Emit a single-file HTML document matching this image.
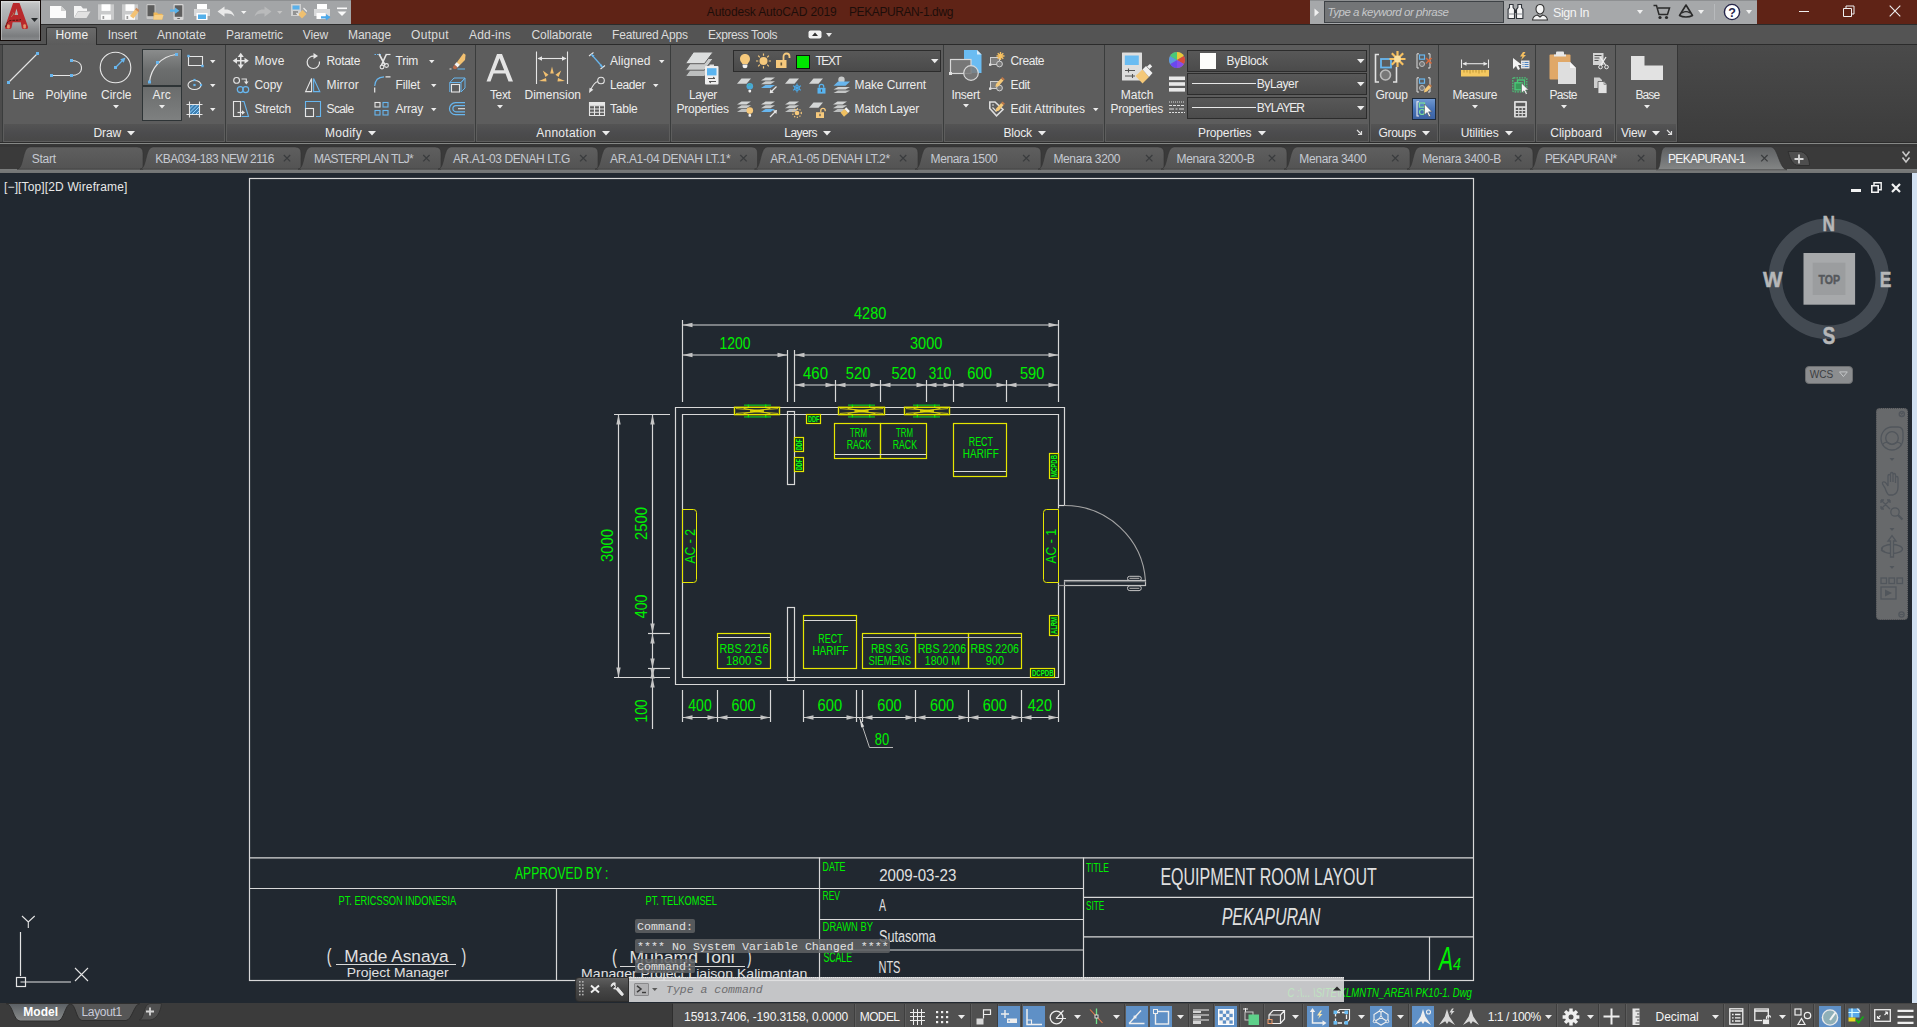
<!DOCTYPE html>
<html><head><meta charset="utf-8"><title>AutoCAD</title>
<style>
html,body{margin:0;padding:0;}
body{width:1917px;height:1027px;overflow:hidden;position:relative;background:#212830;font-family:"Liberation Sans",sans-serif;}
.t{position:absolute;white-space:nowrap;}
.dwg{position:absolute;left:0;top:0;}
#ui{position:absolute;left:0;top:0;width:1917px;height:1027px;}
</style></head><body>
<svg class="dwg" width="1917" height="1027" viewBox="0 0 1917 1027"><rect x="249.5" y="178.5" width="1224.0" height="802.0" fill="none" stroke="#d8d8d8" stroke-width="1.2" rx="0"/>
<line x1="249.5" y1="857.9" x2="1473.5" y2="857.9" stroke="#d8d8d8" stroke-width="1.2"/>
<line x1="249.5" y1="888.5" x2="1083.5" y2="888.5" stroke="#d8d8d8" stroke-width="1.2"/>
<line x1="556.5" y1="888.5" x2="556.5" y2="980.5" stroke="#d8d8d8" stroke-width="1.2"/>
<line x1="819.5" y1="857.5" x2="819.5" y2="980.5" stroke="#d8d8d8" stroke-width="1.2"/>
<line x1="1083.5" y1="857.5" x2="1083.5" y2="980.5" stroke="#d8d8d8" stroke-width="1.2"/>
<line x1="819.5" y1="919.5" x2="1083.5" y2="919.5" stroke="#d8d8d8" stroke-width="1.2"/>
<line x1="819.5" y1="950" x2="1083.5" y2="950" stroke="#d8d8d8" stroke-width="1.2"/>
<line x1="1083.5" y1="897.3" x2="1473.5" y2="897.3" stroke="#d8d8d8" stroke-width="1.2"/>
<line x1="1083.5" y1="936.8" x2="1473.5" y2="936.8" stroke="#d8d8d8" stroke-width="1.2"/>
<line x1="1429.5" y1="936.8" x2="1429.5" y2="980.5" stroke="#d8d8d8" stroke-width="1.2"/>
<polyline points="1064.5,505.5 1064.5,407.5 675.5,407.5 675.5,684.5 1064.5,684.5 1064.5,585.5" fill="none" stroke="#d8d8d8" stroke-width="1.2"/>
<polyline points="1058.5,508.5 1058.5,414.5 682.5,414.5 682.5,677.5 1058.5,677.5 1058.5,582.5" fill="none" stroke="#d8d8d8" stroke-width="1.2"/>
<line x1="1058.5" y1="505.5" x2="1064.5" y2="505.5" stroke="#d8d8d8" stroke-width="1.2"/>
<rect x="787.5" y="411.5" width="7.0" height="73.0" fill="none" stroke="#d8d8d8" stroke-width="1.2" rx="0"/>
<rect x="787.5" y="607.5" width="7.0" height="73.0" fill="none" stroke="#d8d8d8" stroke-width="1.2" rx="0"/>
<path d="M1064.5,505.5 A81,80.5 0 0 1 1145.5,581" fill="none" stroke="#a4a4a4" stroke-width="1.1"/>
<rect x="1064.5" y="580.5" width="81.0" height="5.0" fill="none" stroke="#c0c0c0" stroke-width="1.2" rx="0"/>
<line x1="1058.5" y1="585.5" x2="1064.5" y2="585.5" stroke="#909090" stroke-width="1.2"/>
<rect x="1127.5" y="576.3" width="13.8" height="4.3" rx="2.1" fill="none" stroke="#c4c4c4" stroke-width="1"/><rect x="1127.5" y="585.8" width="13.8" height="4.8" rx="2.3" fill="none" stroke="#c4c4c4" stroke-width="1"/><path d="M1129.5,578.4 H1139.3 M1129.5,588.3 H1139.3" stroke="#9a9a9a" stroke-width="1.2"/>
<line x1="1064.5" y1="581.7" x2="1145.5" y2="581.7" stroke="#707478" stroke-width="1.2"/>
<line x1="744" y1="405.2" x2="771" y2="405.2" stroke="#12a422" stroke-width="1.5"/>
<line x1="744" y1="416.9" x2="771" y2="416.9" stroke="#12a422" stroke-width="1.5"/>
<line x1="748.4" y1="404.6" x2="748.4" y2="407.6" stroke="#00e000" stroke-width="1.3"/>
<line x1="748.4" y1="414.4" x2="748.4" y2="417.4" stroke="#00e000" stroke-width="1.3"/>
<line x1="765.7" y1="404.6" x2="765.7" y2="407.6" stroke="#00e000" stroke-width="1.3"/>
<line x1="765.7" y1="414.4" x2="765.7" y2="417.4" stroke="#00e000" stroke-width="1.3"/>
<rect x="734.5" y="407.3" width="45.0" height="7.3" fill="none" stroke="#e6e600" stroke-width="1.4"/>
<path d="M736.0,408.6 L760.0,410.4 M736.0,413.4 L760.0,411.6 M778.0,408.6 L754.0,410.4 M778.0,413.4 L754.0,411.6 M743.5,408.3 L755.0,410.6 M743.5,413.7 L755.0,411.4 M770.5,408.3 L759.0,410.6 M770.5,413.7 L759.0,411.4" fill="none" stroke="#d6cc10" stroke-width="0.9"/>
<path d="M750.0,411 L764.0,411" stroke="#e8e000" stroke-width="1.6"/>
<line x1="848" y1="405.2" x2="875" y2="405.2" stroke="#12a422" stroke-width="1.5"/>
<line x1="848" y1="416.9" x2="875" y2="416.9" stroke="#12a422" stroke-width="1.5"/>
<line x1="852.4" y1="404.6" x2="852.4" y2="407.6" stroke="#00e000" stroke-width="1.3"/>
<line x1="852.4" y1="414.4" x2="852.4" y2="417.4" stroke="#00e000" stroke-width="1.3"/>
<line x1="869.7" y1="404.6" x2="869.7" y2="407.6" stroke="#00e000" stroke-width="1.3"/>
<line x1="869.7" y1="414.4" x2="869.7" y2="417.4" stroke="#00e000" stroke-width="1.3"/>
<rect x="838.5" y="407.3" width="46.0" height="7.3" fill="none" stroke="#e6e600" stroke-width="1.4"/>
<path d="M840.0,408.6 L864.5,410.4 M840.0,413.4 L864.5,411.6 M883.0,408.6 L858.5,410.4 M883.0,413.4 L858.5,411.6 M847.5,408.3 L859.5,410.6 M847.5,413.7 L859.5,411.4 M875.5,408.3 L863.5,410.6 M875.5,413.7 L863.5,411.4" fill="none" stroke="#d6cc10" stroke-width="0.9"/>
<path d="M854.5,411 L868.5,411" stroke="#e8e000" stroke-width="1.6"/>
<line x1="913" y1="405.2" x2="940" y2="405.2" stroke="#12a422" stroke-width="1.5"/>
<line x1="913" y1="416.9" x2="940" y2="416.9" stroke="#12a422" stroke-width="1.5"/>
<line x1="917.4" y1="404.6" x2="917.4" y2="407.6" stroke="#00e000" stroke-width="1.3"/>
<line x1="917.4" y1="414.4" x2="917.4" y2="417.4" stroke="#00e000" stroke-width="1.3"/>
<line x1="934.7" y1="404.6" x2="934.7" y2="407.6" stroke="#00e000" stroke-width="1.3"/>
<line x1="934.7" y1="414.4" x2="934.7" y2="417.4" stroke="#00e000" stroke-width="1.3"/>
<rect x="904.5" y="407.3" width="45.0" height="7.3" fill="none" stroke="#e6e600" stroke-width="1.4"/>
<path d="M906.0,408.6 L930.0,410.4 M906.0,413.4 L930.0,411.6 M948.0,408.6 L924.0,410.4 M948.0,413.4 L924.0,411.6 M913.5,408.3 L925.0,410.6 M913.5,413.7 L925.0,411.4 M940.5,408.3 L929.0,410.6 M940.5,413.7 L929.0,411.4" fill="none" stroke="#d6cc10" stroke-width="0.9"/>
<path d="M920.0,411 L934.0,411" stroke="#e8e000" stroke-width="1.6"/>
<rect x="834.5" y="423.5" width="46.0" height="35.0" fill="none" stroke="#e6e600" stroke-width="1.2" rx="0"/>
<rect x="880.5" y="423.5" width="46.0" height="35.0" fill="none" stroke="#e6e600" stroke-width="1.2" rx="0"/>
<line x1="835" y1="454.5" x2="926" y2="454.5" stroke="#d8d8d8" stroke-width="1.2"/>
<rect x="953.5" y="423.5" width="53.0" height="53.0" fill="none" stroke="#e6e600" stroke-width="1.2" rx="0"/>
<line x1="954" y1="471.5" x2="1006" y2="471.5" stroke="#d8d8d8" stroke-width="1.2"/>
<rect x="717.5" y="633.5" width="53.0" height="35.0" fill="none" stroke="#e6e600" stroke-width="1.2" rx="0"/>
<line x1="718" y1="637.5" x2="770" y2="637.5" stroke="#d8d8d8" stroke-width="1.2"/>
<rect x="803.5" y="615.5" width="53.0" height="53.0" fill="none" stroke="#e6e600" stroke-width="1.2" rx="0"/>
<line x1="804" y1="620.5" x2="856" y2="620.5" stroke="#d8d8d8" stroke-width="1.2"/>
<rect x="862.5" y="633.5" width="53.0" height="35.0" fill="none" stroke="#e6e600" stroke-width="1.2" rx="0"/>
<rect x="915.5" y="633.5" width="53.0" height="35.0" fill="none" stroke="#e6e600" stroke-width="1.2" rx="0"/>
<rect x="968.5" y="633.5" width="53.0" height="35.0" fill="none" stroke="#e6e600" stroke-width="1.2" rx="0"/>
<line x1="863" y1="637.5" x2="1021" y2="637.5" stroke="#bcbcbc" stroke-width="1.2"/>
<path d="M1058.5,509.5 H1046.5 Q1043.5,509.5 1043.5,512.5 V579.5 Q1043.5,582.5 1046.5,582.5 H1058.5 Z" fill="none" stroke="#e6e600"/>
<path d="M682.5,509.5 H693.5 Q696.5,509.5 696.5,512.5 V579.5 Q696.5,582.5 693.5,582.5 H682.5 Z" fill="none" stroke="#e6e600"/>
<rect x="806.5" y="414.5" width="14.0" height="9.0" fill="#14301c" stroke="#e6e600" stroke-width="1.2"/>
<rect x="794.5" y="437.5" width="9.0" height="14.0" fill="#14301c" stroke="#e6e600" stroke-width="1.2"/>
<rect x="794.5" y="457.5" width="9.0" height="14.0" fill="#14301c" stroke="#e6e600" stroke-width="1.2"/>
<rect x="1049.5" y="453.5" width="9.0" height="25.0" fill="#14301c" stroke="#e6e600" stroke-width="1.2"/>
<rect x="1049.5" y="615.5" width="9.0" height="20.0" fill="#14301c" stroke="#e6e600" stroke-width="1.2"/>
<rect x="1030.5" y="668.5" width="24.0" height="9.0" fill="#14301c" stroke="#e6e600" stroke-width="1.2"/>
<text x="808.00" y="422.20" font-size="9.43" fill="#10ff10" textLength="11.50" lengthAdjust="spacingAndGlyphs" font-family="Liberation Sans" font-weight="bold">DDF</text>
<text transform="translate(802.00,450.00) rotate(-90)" x="0" y="0" font-size="8.57" fill="#10ff10" textLength="11.00" lengthAdjust="spacingAndGlyphs" font-family="Liberation Sans" font-weight="bold">DDF</text>
<text transform="translate(802.00,470.00) rotate(-90)" x="0" y="0" font-size="8.57" fill="#10ff10" textLength="11.00" lengthAdjust="spacingAndGlyphs" font-family="Liberation Sans" font-weight="bold">DDF</text>
<text transform="translate(1057.00,477.00) rotate(-90)" x="0" y="0" font-size="8.57" fill="#10ff10" textLength="22.00" lengthAdjust="spacingAndGlyphs" font-family="Liberation Sans" font-weight="bold">MCPDB</text>
<text transform="translate(1057.00,634.00) rotate(-90)" x="0" y="0" font-size="8.57" fill="#10ff10" textLength="17.00" lengthAdjust="spacingAndGlyphs" font-family="Liberation Sans" font-weight="bold">ALRM</text>
<text x="1032.00" y="676.20" font-size="9.43" fill="#10ff10" textLength="21.50" lengthAdjust="spacingAndGlyphs" font-family="Liberation Sans" font-weight="bold">DCPDB</text>
<text x="850.00" y="437.00" font-size="12.86" fill="#00f000" textLength="17.00" lengthAdjust="spacingAndGlyphs" font-family="Liberation Sans" >TRM</text>
<text x="846.70" y="449.00" font-size="12.86" fill="#00f000" textLength="24.30" lengthAdjust="spacingAndGlyphs" font-family="Liberation Sans" >RACK</text>
<text x="896.00" y="437.00" font-size="12.86" fill="#00f000" textLength="17.00" lengthAdjust="spacingAndGlyphs" font-family="Liberation Sans" >TRM</text>
<text x="892.70" y="449.00" font-size="12.86" fill="#00f000" textLength="24.30" lengthAdjust="spacingAndGlyphs" font-family="Liberation Sans" >RACK</text>
<text x="968.70" y="445.70" font-size="13.29" fill="#00f000" textLength="24.30" lengthAdjust="spacingAndGlyphs" font-family="Liberation Sans" >RECT</text>
<text x="962.80" y="457.60" font-size="13.29" fill="#00f000" textLength="36.00" lengthAdjust="spacingAndGlyphs" font-family="Liberation Sans" >HARIFF</text>
<text x="818.30" y="642.60" font-size="13.29" fill="#00f000" textLength="24.30" lengthAdjust="spacingAndGlyphs" font-family="Liberation Sans" >RECT</text>
<text x="812.40" y="654.80" font-size="13.29" fill="#00f000" textLength="36.00" lengthAdjust="spacingAndGlyphs" font-family="Liberation Sans" >HARIFF</text>
<text x="719.50" y="653.20" font-size="13.29" fill="#00f000" textLength="49.00" lengthAdjust="spacingAndGlyphs" font-family="Liberation Sans" >RBS 2216</text>
<text x="726.00" y="665.40" font-size="13.29" fill="#00f000" textLength="36.00" lengthAdjust="spacingAndGlyphs" font-family="Liberation Sans" >1800 S</text>
<text x="871.00" y="653.20" font-size="13.29" fill="#00f000" textLength="37.30" lengthAdjust="spacingAndGlyphs" font-family="Liberation Sans" >RBS 3G</text>
<text x="868.40" y="665.40" font-size="13.29" fill="#00f000" textLength="42.60" lengthAdjust="spacingAndGlyphs" font-family="Liberation Sans" >SIEMENS</text>
<text x="917.70" y="653.20" font-size="13.29" fill="#00f000" textLength="48.50" lengthAdjust="spacingAndGlyphs" font-family="Liberation Sans" >RBS 2206</text>
<text x="924.80" y="665.40" font-size="13.29" fill="#00f000" textLength="35.20" lengthAdjust="spacingAndGlyphs" font-family="Liberation Sans" >1800 M</text>
<text x="970.60" y="653.20" font-size="13.29" fill="#00f000" textLength="48.40" lengthAdjust="spacingAndGlyphs" font-family="Liberation Sans" >RBS 2206</text>
<text x="985.80" y="665.40" font-size="13.29" fill="#00f000" textLength="18.20" lengthAdjust="spacingAndGlyphs" font-family="Liberation Sans" >900</text>
<text transform="translate(1055.70,563.60) rotate(-90)" x="0" y="0" font-size="15.00" fill="#00f000" textLength="34.60" lengthAdjust="spacingAndGlyphs" font-family="Liberation Sans">AC - 1</text>
<text transform="translate(695.10,563.60) rotate(-90)" x="0" y="0" font-size="15.00" fill="#00f000" textLength="34.60" lengthAdjust="spacingAndGlyphs" font-family="Liberation Sans">AC - 2</text>
<line x1="682.5" y1="320" x2="682.5" y2="402" stroke="#d8d8d8" stroke-width="1.2"/>
<line x1="1058.5" y1="320" x2="1058.5" y2="402" stroke="#d8d8d8" stroke-width="1.2"/>
<line x1="682.5" y1="325" x2="1058.5" y2="325" stroke="#d8d8d8" stroke-width="1.2"/>
<polygon points="682.5,325 692.5,322.8 692.5,327.2" fill="#c4c4c4"/>
<polygon points="1058.5,325 1048.5,322.8 1048.5,327.2" fill="#c4c4c4"/>
<text x="854.00" y="318.80" font-size="17.14" fill="#00f000" textLength="32.30" lengthAdjust="spacingAndGlyphs" font-family="Liberation Sans" >4280</text>
<line x1="787.5" y1="350" x2="787.5" y2="402" stroke="#d8d8d8" stroke-width="1.2"/>
<line x1="794.5" y1="350" x2="794.5" y2="402" stroke="#d8d8d8" stroke-width="1.2"/>
<line x1="682.5" y1="355" x2="787.5" y2="355" stroke="#d8d8d8" stroke-width="1.2"/>
<polygon points="682.5,355 692.5,352.8 692.5,357.2" fill="#c4c4c4"/>
<polygon points="787.5,355 777.5,352.8 777.5,357.2" fill="#c4c4c4"/>
<line x1="794.5" y1="355" x2="1058.5" y2="355" stroke="#d8d8d8" stroke-width="1.2"/>
<polygon points="794.5,355 804.5,352.8 804.5,357.2" fill="#c4c4c4"/>
<polygon points="1058.5,355 1048.5,352.8 1048.5,357.2" fill="#c4c4c4"/>
<text x="719.60" y="349.20" font-size="17.14" fill="#00f000" textLength="31.00" lengthAdjust="spacingAndGlyphs" font-family="Liberation Sans" >1200</text>
<text x="910.00" y="349.20" font-size="17.14" fill="#00f000" textLength="32.40" lengthAdjust="spacingAndGlyphs" font-family="Liberation Sans" >3000</text>
<line x1="835.5" y1="380" x2="835.5" y2="402" stroke="#d8d8d8" stroke-width="1.2"/>
<line x1="880.5" y1="380" x2="880.5" y2="402" stroke="#d8d8d8" stroke-width="1.2"/>
<line x1="926.5" y1="380" x2="926.5" y2="402" stroke="#d8d8d8" stroke-width="1.2"/>
<line x1="953.5" y1="380" x2="953.5" y2="402" stroke="#d8d8d8" stroke-width="1.2"/>
<line x1="1006.5" y1="380" x2="1006.5" y2="402" stroke="#d8d8d8" stroke-width="1.2"/>
<line x1="794.5" y1="385" x2="835.5" y2="385" stroke="#d8d8d8" stroke-width="1.2"/>
<polygon points="794.5,385 804.5,382.8 804.5,387.2" fill="#c4c4c4"/>
<polygon points="835.5,385 825.5,382.8 825.5,387.2" fill="#c4c4c4"/>
<line x1="835.5" y1="385" x2="880.5" y2="385" stroke="#d8d8d8" stroke-width="1.2"/>
<polygon points="835.5,385 845.5,382.8 845.5,387.2" fill="#c4c4c4"/>
<polygon points="880.5,385 870.5,382.8 870.5,387.2" fill="#c4c4c4"/>
<line x1="880.5" y1="385" x2="926.5" y2="385" stroke="#d8d8d8" stroke-width="1.2"/>
<polygon points="880.5,385 890.5,382.8 890.5,387.2" fill="#c4c4c4"/>
<polygon points="926.5,385 916.5,382.8 916.5,387.2" fill="#c4c4c4"/>
<line x1="926.5" y1="385" x2="953.5" y2="385" stroke="#d8d8d8" stroke-width="1.2"/>
<polygon points="926.5,385 936.5,382.8 936.5,387.2" fill="#c4c4c4"/>
<polygon points="953.5,385 943.5,382.8 943.5,387.2" fill="#c4c4c4"/>
<line x1="953.5" y1="385" x2="1006.5" y2="385" stroke="#d8d8d8" stroke-width="1.2"/>
<polygon points="953.5,385 963.5,382.8 963.5,387.2" fill="#c4c4c4"/>
<polygon points="1006.5,385 996.5,382.8 996.5,387.2" fill="#c4c4c4"/>
<line x1="1006.5" y1="385" x2="1058.5" y2="385" stroke="#d8d8d8" stroke-width="1.2"/>
<polygon points="1006.5,385 1016.5,382.8 1016.5,387.2" fill="#c4c4c4"/>
<polygon points="1058.5,385 1048.5,382.8 1048.5,387.2" fill="#c4c4c4"/>
<text x="803.00" y="378.80" font-size="17.14" fill="#00f000" textLength="25.00" lengthAdjust="spacingAndGlyphs" font-family="Liberation Sans" >460</text>
<text x="845.80" y="378.80" font-size="17.14" fill="#00f000" textLength="24.50" lengthAdjust="spacingAndGlyphs" font-family="Liberation Sans" >520</text>
<text x="891.40" y="378.80" font-size="17.14" fill="#00f000" textLength="24.40" lengthAdjust="spacingAndGlyphs" font-family="Liberation Sans" >520</text>
<text x="928.70" y="378.80" font-size="17.14" fill="#00f000" textLength="22.60" lengthAdjust="spacingAndGlyphs" font-family="Liberation Sans" >310</text>
<text x="967.30" y="378.80" font-size="17.14" fill="#00f000" textLength="24.70" lengthAdjust="spacingAndGlyphs" font-family="Liberation Sans" >600</text>
<text x="1019.90" y="378.80" font-size="17.14" fill="#00f000" textLength="24.40" lengthAdjust="spacingAndGlyphs" font-family="Liberation Sans" >590</text>
<line x1="614" y1="414.5" x2="670" y2="414.5" stroke="#d8d8d8" stroke-width="1.2"/>
<line x1="614" y1="677.5" x2="670" y2="677.5" stroke="#d8d8d8" stroke-width="1.2"/>
<line x1="648" y1="633.5" x2="670" y2="633.5" stroke="#d8d8d8" stroke-width="1.2"/>
<line x1="648" y1="668.5" x2="670" y2="668.5" stroke="#d8d8d8" stroke-width="1.2"/>
<line x1="618.5" y1="414.5" x2="618.5" y2="677.5" stroke="#d8d8d8" stroke-width="1.2"/>
<polygon points="618.5,414.5 616.3,424.5 620.7,424.5" fill="#c4c4c4"/>
<polygon points="618.5,677.5 616.3,667.5 620.7,667.5" fill="#c4c4c4"/>
<line x1="652.5" y1="414.5" x2="652.5" y2="729" stroke="#d8d8d8" stroke-width="1.2"/>
<polygon points="652.5,414.5 650.3,424.5 654.7,424.5" fill="#c4c4c4"/>
<polygon points="652.5,633.5 650.3,623.5 654.7,623.5" fill="#c4c4c4"/>
<polygon points="652.5,633.5 650.3,643.5 654.7,643.5" fill="#c4c4c4"/>
<polygon points="652.5,668.5 650.3,658.5 654.7,658.5" fill="#c4c4c4"/>
<polygon points="652.5,668.5 650.3,678.5 654.7,678.5" fill="#c4c4c4"/>
<polygon points="652.5,677.5 650.3,668.5 654.7,668.5" fill="#c4c4c4"/>
<polygon points="652.5,677.5 650.3,687.5 654.7,687.5" fill="#c4c4c4"/>
<text transform="translate(612.60,562.00) rotate(-90)" x="0" y="0" font-size="17.14" fill="#00f000" textLength="33.00" lengthAdjust="spacingAndGlyphs" font-family="Liberation Sans">3000</text>
<text transform="translate(646.70,540.00) rotate(-90)" x="0" y="0" font-size="17.14" fill="#00f000" textLength="33.00" lengthAdjust="spacingAndGlyphs" font-family="Liberation Sans">2500</text>
<text transform="translate(646.70,618.30) rotate(-90)" x="0" y="0" font-size="17.14" fill="#00f000" textLength="23.80" lengthAdjust="spacingAndGlyphs" font-family="Liberation Sans">400</text>
<text transform="translate(646.70,722.60) rotate(-90)" x="0" y="0" font-size="17.14" fill="#00f000" textLength="23.20" lengthAdjust="spacingAndGlyphs" font-family="Liberation Sans">100</text>
<line x1="682.5" y1="690" x2="682.5" y2="722" stroke="#d8d8d8" stroke-width="1.2"/>
<line x1="717.5" y1="690" x2="717.5" y2="722" stroke="#d8d8d8" stroke-width="1.2"/>
<line x1="770.5" y1="690" x2="770.5" y2="722" stroke="#d8d8d8" stroke-width="1.2"/>
<line x1="682.5" y1="717.5" x2="717.5" y2="717.5" stroke="#d8d8d8" stroke-width="1.2"/>
<polygon points="682.5,717.5 692.5,715.3 692.5,719.7" fill="#c4c4c4"/>
<polygon points="717.5,717.5 707.5,715.3 707.5,719.7" fill="#c4c4c4"/>
<line x1="717.5" y1="717.5" x2="770.5" y2="717.5" stroke="#d8d8d8" stroke-width="1.2"/>
<polygon points="717.5,717.5 727.5,715.3 727.5,719.7" fill="#c4c4c4"/>
<polygon points="770.5,717.5 760.5,715.3 760.5,719.7" fill="#c4c4c4"/>
<text x="688.30" y="711.00" font-size="17.14" fill="#00f000" textLength="23.40" lengthAdjust="spacingAndGlyphs" font-family="Liberation Sans" >400</text>
<text x="731.60" y="711.00" font-size="17.14" fill="#00f000" textLength="23.80" lengthAdjust="spacingAndGlyphs" font-family="Liberation Sans" >600</text>
<line x1="803.5" y1="690" x2="803.5" y2="722" stroke="#d8d8d8" stroke-width="1.2"/>
<line x1="856.5" y1="690" x2="856.5" y2="722" stroke="#d8d8d8" stroke-width="1.2"/>
<line x1="862.5" y1="690" x2="862.5" y2="722" stroke="#d8d8d8" stroke-width="1.2"/>
<line x1="915.5" y1="690" x2="915.5" y2="722" stroke="#d8d8d8" stroke-width="1.2"/>
<line x1="968.5" y1="690" x2="968.5" y2="722" stroke="#d8d8d8" stroke-width="1.2"/>
<line x1="1021.5" y1="690" x2="1021.5" y2="722" stroke="#d8d8d8" stroke-width="1.2"/>
<line x1="1058.5" y1="690" x2="1058.5" y2="722" stroke="#d8d8d8" stroke-width="1.2"/>
<line x1="803.5" y1="717.5" x2="1058.5" y2="717.5" stroke="#d8d8d8" stroke-width="1.2"/>
<polygon points="803.5,717.5 813.5,715.3 813.5,719.7" fill="#c4c4c4"/>
<polygon points="856.5,717.5 846.5,715.3 846.5,719.7" fill="#c4c4c4"/>
<polygon points="862.5,717.5 872.5,715.3 872.5,719.7" fill="#c4c4c4"/>
<polygon points="915.5,717.5 905.5,715.3 905.5,719.7" fill="#c4c4c4"/>
<polygon points="915.5,717.5 925.5,715.3 925.5,719.7" fill="#c4c4c4"/>
<polygon points="968.5,717.5 958.5,715.3 958.5,719.7" fill="#c4c4c4"/>
<polygon points="968.5,717.5 978.5,715.3 978.5,719.7" fill="#c4c4c4"/>
<polygon points="1021.5,717.5 1011.5,715.3 1011.5,719.7" fill="#c4c4c4"/>
<polygon points="1021.5,717.5 1031.5,715.3 1031.5,719.7" fill="#c4c4c4"/>
<polygon points="1058.5,717.5 1048.5,715.3 1048.5,719.7" fill="#c4c4c4"/>
<polygon points="856.5,717.5 856.5,715.3 856.5,719.7" fill="#c4c4c4"/>
<text x="817.60" y="711.10" font-size="17.14" fill="#00f000" textLength="24.50" lengthAdjust="spacingAndGlyphs" font-family="Liberation Sans" >600</text>
<text x="877.30" y="711.10" font-size="17.14" fill="#00f000" textLength="24.30" lengthAdjust="spacingAndGlyphs" font-family="Liberation Sans" >600</text>
<text x="929.90" y="711.10" font-size="17.14" fill="#00f000" textLength="24.30" lengthAdjust="spacingAndGlyphs" font-family="Liberation Sans" >600</text>
<text x="982.70" y="711.10" font-size="17.14" fill="#00f000" textLength="24.20" lengthAdjust="spacingAndGlyphs" font-family="Liberation Sans" >600</text>
<text x="1027.70" y="711.10" font-size="17.14" fill="#00f000" textLength="24.30" lengthAdjust="spacingAndGlyphs" font-family="Liberation Sans" >420</text>
<polyline points="859.5,717.5 869.5,747.5 893,747.5" fill="none" stroke="#b8b8b8"/>
<polygon points="859.5,717.5 857.3,717.5 861.7,717.5" fill="#c4c4c4"/>
<polygon points="859.5,717.5 861.2,727.5 864.2,726.5" fill="#d8d8d8"/>
<text x="874.70" y="744.80" font-size="17.14" fill="#00f000" textLength="14.40" lengthAdjust="spacingAndGlyphs" font-family="Liberation Sans" >80</text>
<text x="515.00" y="879.10" font-size="16.71" fill="#00f000" textLength="93.50" lengthAdjust="spacingAndGlyphs" font-family="Liberation Sans" >APPROVED BY :</text>
<text x="338.50" y="905.10" font-size="13.14" fill="#00f000" textLength="117.70" lengthAdjust="spacingAndGlyphs" font-family="Liberation Sans" >PT. ERICSSON INDONESIA</text>
<text x="645.50" y="905.00" font-size="13.43" fill="#00f000" textLength="71.40" lengthAdjust="spacingAndGlyphs" font-family="Liberation Sans" >PT. TELKOMSEL</text>
<text x="326.80" y="962.50" font-size="20.00" fill="#e0e0e0" textLength="4.70" lengthAdjust="spacingAndGlyphs" font-family="Liberation Sans" >(</text>
<text x="461.50" y="962.50" font-size="20.00" fill="#e0e0e0" textLength="4.70" lengthAdjust="spacingAndGlyphs" font-family="Liberation Sans" >)</text>
<text x="344.30" y="961.90" font-size="16.71" fill="#e0e0e0" textLength="104.40" lengthAdjust="spacingAndGlyphs" font-family="Liberation Sans" >Made Asnaya</text>
<line x1="336" y1="964.5" x2="456" y2="964.5" stroke="#d8d8d8" stroke-width="1.2"/>
<text x="346.80" y="976.90" font-size="12.43" fill="#e0e0e0" textLength="101.90" lengthAdjust="spacingAndGlyphs" font-family="Liberation Sans" >Project Manager</text>
<text x="612.10" y="963.50" font-size="20.00" fill="#e0e0e0" textLength="4.90" lengthAdjust="spacingAndGlyphs" font-family="Liberation Sans" >(</text>
<text x="747.00" y="963.50" font-size="20.00" fill="#e0e0e0" textLength="4.60" lengthAdjust="spacingAndGlyphs" font-family="Liberation Sans" >)</text>
<text x="629.60" y="962.70" font-size="16.43" fill="#e0e0e0" textLength="105.10" lengthAdjust="spacingAndGlyphs" font-family="Liberation Sans" >Muhamd Toni</text>
<line x1="620" y1="966.5" x2="745" y2="966.5" stroke="#d8d8d8" stroke-width="1.2"/>
<text x="581.10" y="977.70" font-size="12.29" fill="#e0e0e0" textLength="226.30" lengthAdjust="spacingAndGlyphs" font-family="Liberation Sans" >Manager Project Liaison Kalimantan</text>
<text x="822.60" y="870.70" font-size="13.43" fill="#00f000" textLength="22.90" lengthAdjust="spacingAndGlyphs" font-family="Liberation Sans" >DATE</text>
<text x="822.60" y="900.30" font-size="12.86" fill="#00f000" textLength="17.40" lengthAdjust="spacingAndGlyphs" font-family="Liberation Sans" >REV</text>
<text x="822.60" y="931.10" font-size="13.14" fill="#00f000" textLength="50.40" lengthAdjust="spacingAndGlyphs" font-family="Liberation Sans" >DRAWN BY</text>
<text x="823.50" y="962.10" font-size="14.00" fill="#00f000" textLength="28.50" lengthAdjust="spacingAndGlyphs" font-family="Liberation Sans" >SCALE</text>
<text x="879.20" y="881.00" font-size="17.14" fill="#e0e0e0" textLength="77.10" lengthAdjust="spacingAndGlyphs" font-family="Liberation Sans" >2009-03-23</text>
<text x="879.00" y="911.30" font-size="17.14" fill="#e0e0e0" textLength="7.00" lengthAdjust="spacingAndGlyphs" font-family="Liberation Sans" >A</text>
<text x="879.00" y="942.00" font-size="16.71" fill="#e0e0e0" textLength="56.80" lengthAdjust="spacingAndGlyphs" font-family="Liberation Sans" >Sutasoma</text>
<text x="878.50" y="973.40" font-size="17.14" fill="#e0e0e0" textLength="21.90" lengthAdjust="spacingAndGlyphs" font-family="Liberation Sans" >NTS</text>
<text x="1085.90" y="871.90" font-size="13.00" fill="#00f000" textLength="23.00" lengthAdjust="spacingAndGlyphs" font-family="Liberation Sans" >TITLE</text>
<text x="1085.90" y="910.20" font-size="13.00" fill="#00f000" textLength="18.30" lengthAdjust="spacingAndGlyphs" font-family="Liberation Sans" >SITE</text>
<text x="1160.40" y="885.40" font-size="23.43" fill="#e0e0e0" textLength="216.50" lengthAdjust="spacingAndGlyphs" font-family="Liberation Sans" >EQUIPMENT ROOM LAYOUT</text>
<text x="1221.70" y="924.90" font-size="23.57" fill="#e0e0e0" textLength="98.60" lengthAdjust="spacingAndGlyphs" font-family="Liberation Sans" font-style="italic" >PEKAPURAN</text>
<text x="1439.00" y="969.80" font-size="32.86" fill="#00f000" textLength="14.00" lengthAdjust="spacingAndGlyphs" font-family="Liberation Sans" font-style="italic" >A</text>
<text x="1453.00" y="969.80" font-size="17.14" fill="#00f000" textLength="8.00" lengthAdjust="spacingAndGlyphs" font-family="Liberation Sans" font-style="italic" >4</text>
<text x="1287.50" y="996.80" font-size="12.57" fill="#00f000" textLength="184.40" lengthAdjust="spacingAndGlyphs" font-family="Liberation Sans" font-style="italic" >C :\...  \SITE\KLMNTN_AREA\ PK10-1. Dwg</text>
<line x1="20.5" y1="932" x2="20.5" y2="976" stroke="#e4e4e4" stroke-width="1.2"/>
<line x1="20.5" y1="982" x2="71" y2="982" stroke="#e4e4e4" stroke-width="1.2"/>
<rect x="16.5" y="977.5" width="9.0" height="9.0" fill="none" stroke="#e4e4e4" stroke-width="1.2" rx="0"/>
<path d="M22,916 L28.3,922 L34.7,916 M28.3,922 V928" fill="none" stroke="#e4e4e4" stroke-width="1.1"/>
<path d="M75,968 L88,981 M88,968 L75,981" fill="none" stroke="#e4e4e4" stroke-width="1.1"/></svg>
<div id="ui">
<div style="position:absolute;left:0px;top:0px;width:1917px;height:24px;background:#5f2316"></div>
<div style="position:absolute;left:40px;top:0px;width:311px;height:24px;background:linear-gradient(#8e9092 0,#8e9092 1px,#a3a5a7 1px,#a3a5a7 100%)"></div>
<svg style="position:absolute;left:49px;top:5px" width="18" height="14" viewBox="0 0 18 14"><path d="M1,1 H12 L17,6 V13 H1 Z" fill="#fbfbfb"/><path d="M12,1 V6 H17 Z" fill="#cfcfcf"/></svg>
<svg style="position:absolute;left:73px;top:5px" width="18" height="14" viewBox="0 0 18 14"><path d="M1,1 H8 L10,3.5 H14 V6 H5 L1,13 Z" fill="#f4f4f4"/><path d="M5,6.5 H17.5 L13.5,13 H1.2 Z" fill="#e2e2e2"/></svg>
<svg style="position:absolute;left:97px;top:4px" width="18" height="16" viewBox="0 0 18 16"><path d="M1,0.3 H17 V15.8 H1 Z" fill="#c9cacb"/><rect x="4.5" y="0.3" width="9" height="6.6" fill="#fff"/><rect x="4" y="10.5" width="10" height="5.3" fill="#fafafa"/><rect x="5.5" y="12" width="1.7" height="3" fill="#9a9a9a"/></svg>
<svg style="position:absolute;left:121px;top:4px" width="18" height="16" viewBox="0 0 18 16"><path d="M1,0.3 H17 V15.8 H1 Z" fill="#c9cacb"/><rect x="4.5" y="0.3" width="9" height="6.6" fill="#fff"/><rect x="4" y="10.5" width="10" height="5.3" fill="#fafafa"/><rect x="5.5" y="12" width="1.7" height="3" fill="#9a9a9a"/><path d="M9,12 L14,5.5 L17.5,8 L12.5,14.5 Z" fill="#f3c274"/><path d="M14,5.5 L15.3,3.8 L18.6,6.3 L17.5,8 Z" fill="#c98a5a"/></svg>
<svg style="position:absolute;left:146px;top:3px" width="18" height="18" viewBox="0 0 18 18"><rect x="0.5" y="1" width="9" height="15" rx="1" fill="#c8c8c8"/><rect x="1.5" y="2.2" width="7" height="11" fill="#5c5c5c"/><path d="M7.5,9.5 H11 L12,10.8 H16.5 V16.5 H7.5 Z" fill="#f0b858"/><path d="M8.6,12 H17.6 L16,16.5 H7.4 Z" fill="#f7cf86"/></svg>
<svg style="position:absolute;left:170px;top:3px" width="16" height="18" viewBox="0 0 16 18"><rect x="3.5" y="1" width="10" height="16" rx="1" fill="#d6d6d6"/><rect x="4.7" y="2.3" width="7.6" height="11.5" fill="#5e5e5e"/><path d="M0,6.6 H5 V4.6 L9.4,7.7 L5,10.8 V8.8 H0 Z" fill="#5ab4ec"/><rect x="7.3" y="15" width="2.6" height="1" fill="#666"/></svg>
<svg style="position:absolute;left:193px;top:3px" width="18" height="18" viewBox="0 0 18 18"><rect x="4" y="1" width="10" height="5" fill="#fff"/><path d="M1,6 H17 V13 H1 Z" fill="#d8d9da"/><rect x="3.5" y="10" width="11" height="7" fill="#fff"/><rect x="5" y="11.5" width="8" height="4.5" fill="#54b0ea"/></svg>
<svg style="position:absolute;left:217px;top:6px" width="19" height="12" viewBox="0 0 19 12"><path d="M0.5,5.5 L7.5,0.5 V3.5 C12.5,3 16,5 17.5,10.5 C14.5,7.2 11.5,7.2 7.5,7.6 V10.8 Z" fill="#e9e9e9"/></svg>
<svg style="position:absolute;left:241.0px;top:10.5px" width="5.5" height="3" viewBox="0 0 5.5 3"><polygon points="0,0 5.5,0 2.75,3" fill="#f4f4f4"/></svg>
<svg style="position:absolute;left:253px;top:6px" width="19" height="12" viewBox="0 0 19 12"><path d="M18.5,5.5 L11.5,0.5 V3.5 C6.5,3 3,5 1.5,10.5 C4.5,7.2 7.5,7.2 11.5,7.6 V10.8 Z" fill="#b9babb"/></svg>
<svg style="position:absolute;left:277.0px;top:10.5px" width="5.5" height="3" viewBox="0 0 5.5 3"><polygon points="0,0 5.5,0 2.75,3" fill="#c4c4c4"/></svg>
<svg style="position:absolute;left:290px;top:3px" width="17" height="18" viewBox="0 0 17 18"><rect x="1" y="1" width="10" height="12" fill="#d0d0d0"/><rect x="2.5" y="2.5" width="7" height="4" fill="#5ab0ea"/><path d="M3,9 H8 M3,11 H8" stroke="#555" stroke-width="1"/><path d="M8,11.5 L12.5,7 L16.5,11 L12,15.5 Z" fill="#efc070"/><path d="M6.5,10 l2,2 M13.5,5 l3.5,3.5" stroke="#eee" stroke-width="1.2"/></svg>
<svg style="position:absolute;left:313px;top:3px" width="18" height="18" viewBox="0 0 18 18"><rect x="4" y="1" width="10" height="5" fill="#fff"/><path d="M1,6 H17 V13 H1 Z" fill="#d8d9da"/><rect x="3.5" y="10" width="9" height="6" fill="#fff"/><path d="M8,13.2 H13 V11 L17.5,14.3 L13,17.6 V15.4 H8 Z" fill="#4aa8ea"/></svg>
<svg style="position:absolute;left:337px;top:7px" width="10" height="10" viewBox="0 0 10 10"><rect x="0" y="0.5" width="10" height="1.6" fill="#fafafa"/><polygon points="0.5,4.5 9.5,4.5 5,9" fill="#fafafa"/></svg>
<div class="t" style="left:706.80px;top:4.80px;font-size:12px;line-height:14.40px;color:#1d0e0a;letter-spacing:-0.146px;">Autodesk AutoCAD 2019</div>
<div class="t" style="left:849.00px;top:4.80px;font-size:12px;line-height:14.40px;color:#1d0e0a;letter-spacing:-0.409px;">PEKAPURAN-1.dwg</div>
<div style="position:absolute;left:1310px;top:0px;width:447px;height:24px;background:linear-gradient(#8e9092 0,#8e9092 1px,#a6a8aa 1px,#a6a8aa 100%)"></div>
<svg style="position:absolute;left:1314px;top:8px" width="6" height="9" viewBox="0 0 6 9"><polygon points="0.5,0.5 5,4.5 0.5,8.5" fill="#f0f0f0"/></svg>
<div style="position:absolute;left:1324px;top:1px;width:180px;height:22px;background:#737577;border:1px solid #3e4246;box-sizing:border-box"></div>
<div class="t" style="left:1327.50px;top:5.60px;font-size:11.5px;line-height:13.80px;color:#c6c8ca;letter-spacing:-0.467px;font-style:italic;">Type a keyword or phrase</div>
<svg style="position:absolute;left:1507px;top:3px" width="17" height="18" viewBox="0 0 17 18"><path d="M2.5,1.5 h3.6 v3 l1.4,1.8 v9.2 h-6.4 v-9.2 l1.4,-1.8 z" fill="#f6f6f6" stroke="#30343a" stroke-width="1.1"/><path d="M10.9,1.5 h3.6 v3 l1.4,1.8 v9.2 h-6.4 v-9.2 l1.4,-1.8 z" fill="#f6f6f6" stroke="#30343a" stroke-width="1.1"/><rect x="7.2" y="6.5" width="2.6" height="3.5" fill="#30343a"/><path d="M1.3,11 h6 M9.7,11 h6" stroke="#8a8e94" stroke-width="1"/></svg>
<svg style="position:absolute;left:1531px;top:3px" width="18" height="18" viewBox="0 0 18 18"><path d="M9,1.5 C11.8,1.5 13,3.5 13,6 C13,8.5 11.6,11 9,11 C6.4,11 5,8.5 5,6 C5,3.5 6.2,1.5 9,1.5 Z" fill="#f5f5f5" stroke="#333" stroke-width="1.1"/><path d="M1.5,17 C2,13.5 4,12.5 6.5,12 L9,14 L11.5,12 C14,12.5 16,13.5 16.5,17 Z" fill="#f5f5f5" stroke="#333" stroke-width="1.1"/></svg>
<div class="t" style="left:1553.00px;top:5.50px;font-size:12.5px;line-height:15.00px;color:#f4f4f4;letter-spacing:-0.417px;">Sign In</div>
<svg style="position:absolute;left:1637.0px;top:10px" width="6" height="4" viewBox="0 0 6 4"><polygon points="0,0 6,0 3.0,4" fill="#f0f0f0"/></svg>
<svg style="position:absolute;left:1653px;top:4px" width="18" height="16" viewBox="0 0 18 16"><path d="M0.5,1.5 H3.5 L6,10.5 H14.5 L16.5,4 H5" fill="none" stroke="#2a2a2a" stroke-width="1.5"/><circle cx="7" cy="13.5" r="1.6" fill="#2a2a2a"/><circle cx="13.5" cy="13.5" r="1.6" fill="#2a2a2a"/></svg>
<svg style="position:absolute;left:1677px;top:3px" width="18" height="16" viewBox="0 0 18 16"><path d="M9,2 L15.5,12.5 C12,14.5 6,14.5 2.5,12.5 Z" fill="none" stroke="#2a2a2a" stroke-width="1.6" stroke-linejoin="round"/><path d="M5,10 C8,8 10,8 13,10" fill="none" stroke="#2a2a2a" stroke-width="1.3"/></svg>
<svg style="position:absolute;left:1698.0px;top:10px" width="6" height="4" viewBox="0 0 6 4"><polygon points="0,0 6,0 3.0,4" fill="#f0f0f0"/></svg>
<div style="position:absolute;left:1714px;top:4px;width:1px;height:16px;background:#b8babc"></div>
<svg style="position:absolute;left:1723px;top:3px" width="18" height="18" viewBox="0 0 18 18"><circle cx="9" cy="9" r="7.6" fill="#fff" stroke="#26264a" stroke-width="1.4"/><text x="9" y="13.5" text-anchor="middle" font-family="Liberation Sans" font-weight="bold" font-size="12.5" fill="#26264a">?</text></svg>
<svg style="position:absolute;left:1746.0px;top:10px" width="6" height="4" viewBox="0 0 6 4"><polygon points="0,0 6,0 3.0,4" fill="#f0f0f0"/></svg>
<div style="position:absolute;left:1799px;top:11px;width:10px;height:1px;background:#f0f0f0"></div>
<svg style="position:absolute;left:1843px;top:5px" width="12" height="12" viewBox="0 0 12 12"><path d="M0.5,3.5 H8.5 V11.5 H0.5 Z M3,3.5 V1 H11 V9 H8.5" fill="none" stroke="#f0f0f0" stroke-width="1"/></svg>
<svg style="position:absolute;left:1889px;top:5px" width="12" height="12" viewBox="0 0 12 12"><path d="M0.7,0.7 L11.3,11.3 M11.3,0.7 L0.7,11.3" stroke="#f0f0f0" stroke-width="1.1"/></svg>
<div style="position:absolute;left:0px;top:24px;width:1917px;height:20px;background:#545454;border-top:1px solid #2b2b2b;box-sizing:border-box"></div>
<svg style="position:absolute;left:808px;top:30px" width="14" height="9" viewBox="0 0 14 9"><rect x="0.5" y="0.5" width="13" height="8" rx="2" fill="#f2f2f2"/><polygon points="4,6 10,6 7,2.6" fill="#333"/></svg>
<svg style="position:absolute;left:826.0px;top:33px" width="6" height="4" viewBox="0 0 6 4"><polygon points="0,0 6,0 3.0,4" fill="#e8e8e8"/></svg>
<div style="position:absolute;left:0px;top:44px;width:1917px;height:99px;background:#4b4b4b;border-top:1px solid #2b2b2b;border-bottom:1px solid #2b2b2b;box-sizing:border-box"></div>
<div style="position:absolute;left:1677px;top:45px;width:240px;height:97px;background:linear-gradient(#4a4a4a,#3c3c3c)"></div>
<div style="position:absolute;left:0px;top:143px;width:1917px;height:1px;background:#868886"></div>
<div style="position:absolute;left:3px;top:45px;width:222px;height:97px;background:#5d5d5d"></div>
<div style="position:absolute;left:4px;top:124px;width:220px;height:17px;background:linear-gradient(#545454,#4c4c4e 50%,#484848)"></div>
<div style="position:absolute;left:2px;top:45px;width:1px;height:97px;background:#3a3c3c"></div>
<div style="position:absolute;left:226px;top:45px;width:249px;height:97px;background:#5d5d5d"></div>
<div style="position:absolute;left:227px;top:124px;width:247px;height:17px;background:linear-gradient(#545454,#4c4c4e 50%,#484848)"></div>
<div style="position:absolute;left:225px;top:45px;width:1px;height:97px;background:#3a3c3c"></div>
<div style="position:absolute;left:476px;top:45px;width:194px;height:97px;background:#5d5d5d"></div>
<div style="position:absolute;left:477px;top:124px;width:192px;height:17px;background:linear-gradient(#545454,#4c4c4e 50%,#484848)"></div>
<div style="position:absolute;left:475px;top:45px;width:1px;height:97px;background:#3a3c3c"></div>
<div style="position:absolute;left:671px;top:45px;width:272px;height:97px;background:#5d5d5d"></div>
<div style="position:absolute;left:672px;top:124px;width:270px;height:17px;background:linear-gradient(#545454,#4c4c4e 50%,#484848)"></div>
<div style="position:absolute;left:670px;top:45px;width:1px;height:97px;background:#3a3c3c"></div>
<div style="position:absolute;left:944px;top:45px;width:160px;height:97px;background:#5d5d5d"></div>
<div style="position:absolute;left:945px;top:124px;width:158px;height:17px;background:linear-gradient(#545454,#4c4c4e 50%,#484848)"></div>
<div style="position:absolute;left:943px;top:45px;width:1px;height:97px;background:#3a3c3c"></div>
<div style="position:absolute;left:1105px;top:45px;width:264px;height:97px;background:#5d5d5d"></div>
<div style="position:absolute;left:1106px;top:124px;width:262px;height:17px;background:linear-gradient(#545454,#4c4c4e 50%,#484848)"></div>
<div style="position:absolute;left:1104px;top:45px;width:1px;height:97px;background:#3a3c3c"></div>
<div style="position:absolute;left:1370px;top:45px;width:68px;height:97px;background:#5d5d5d"></div>
<div style="position:absolute;left:1371px;top:124px;width:66px;height:17px;background:linear-gradient(#545454,#4c4c4e 50%,#484848)"></div>
<div style="position:absolute;left:1369px;top:45px;width:1px;height:97px;background:#3a3c3c"></div>
<div style="position:absolute;left:1439px;top:45px;width:96px;height:97px;background:#5d5d5d"></div>
<div style="position:absolute;left:1440px;top:124px;width:94px;height:17px;background:linear-gradient(#545454,#4c4c4e 50%,#484848)"></div>
<div style="position:absolute;left:1438px;top:45px;width:1px;height:97px;background:#3a3c3c"></div>
<div style="position:absolute;left:1536px;top:45px;width:79px;height:97px;background:#5d5d5d"></div>
<div style="position:absolute;left:1537px;top:124px;width:77px;height:17px;background:linear-gradient(#545454,#4c4c4e 50%,#484848)"></div>
<div style="position:absolute;left:1535px;top:45px;width:1px;height:97px;background:#3a3c3c"></div>
<div style="position:absolute;left:1616px;top:45px;width:61px;height:97px;background:#5d5d5d"></div>
<div style="position:absolute;left:1617px;top:124px;width:59px;height:17px;background:linear-gradient(#545454,#4c4c4e 50%,#484848)"></div>
<div style="position:absolute;left:1615px;top:45px;width:1px;height:97px;background:#3a3c3c"></div>
<div style="position:absolute;left:1677px;top:45px;width:1px;height:97px;background:#353535"></div>
<div class="t" style="left:93.50px;top:126.30px;font-size:12px;line-height:14.40px;color:#ececec;letter-spacing:-0.125px;">Draw</div>
<svg style="position:absolute;left:127.0px;top:131.25px;overflow:visible" width="8" height="4.5" viewBox="0 0 8 4.5"><polygon points="0,0 8,0 4.0,4.5" fill="#ececec"/></svg>
<div class="t" style="left:325.00px;top:126.30px;font-size:12px;line-height:14.40px;color:#ececec;letter-spacing:0.276px;">Modify</div>
<svg style="position:absolute;left:368.0px;top:131.25px;overflow:visible" width="8" height="4.5" viewBox="0 0 8 4.5"><polygon points="0,0 8,0 4.0,4.5" fill="#ececec"/></svg>
<div class="t" style="left:536.20px;top:126.30px;font-size:12px;line-height:14.40px;color:#ececec;letter-spacing:0.272px;">Annotation</div>
<svg style="position:absolute;left:602.3px;top:131.25px;overflow:visible" width="8" height="4.5" viewBox="0 0 8 4.5"><polygon points="0,0 8,0 4.0,4.5" fill="#ececec"/></svg>
<div class="t" style="left:784.30px;top:126.30px;font-size:12px;line-height:14.40px;color:#ececec;letter-spacing:-0.570px;">Layers</div>
<svg style="position:absolute;left:822.9px;top:131.25px;overflow:visible" width="8" height="4.5" viewBox="0 0 8 4.5"><polygon points="0,0 8,0 4.0,4.5" fill="#ececec"/></svg>
<div class="t" style="left:1003.50px;top:126.30px;font-size:12px;line-height:14.40px;color:#ececec;letter-spacing:-0.229px;">Block</div>
<svg style="position:absolute;left:1037.7px;top:131.25px;overflow:visible" width="8" height="4.5" viewBox="0 0 8 4.5"><polygon points="0,0 8,0 4.0,4.5" fill="#ececec"/></svg>
<div class="t" style="left:1198.00px;top:126.30px;font-size:12px;line-height:14.40px;color:#ececec;letter-spacing:-0.119px;">Properties</div>
<svg style="position:absolute;left:1257.5px;top:131.25px;overflow:visible" width="8" height="4.5" viewBox="0 0 8 4.5"><polygon points="0,0 8,0 4.0,4.5" fill="#ececec"/></svg>
<div class="t" style="left:1378.40px;top:126.30px;font-size:12px;line-height:14.40px;color:#ececec;letter-spacing:-0.292px;">Groups</div>
<svg style="position:absolute;left:1422.0px;top:131.25px;overflow:visible" width="8" height="4.5" viewBox="0 0 8 4.5"><polygon points="0,0 8,0 4.0,4.5" fill="#ececec"/></svg>
<div class="t" style="left:1460.70px;top:126.30px;font-size:12px;line-height:14.40px;color:#ececec;letter-spacing:-0.086px;">Utilities</div>
<svg style="position:absolute;left:1504.6px;top:131.25px;overflow:visible" width="8" height="4.5" viewBox="0 0 8 4.5"><polygon points="0,0 8,0 4.0,4.5" fill="#ececec"/></svg>
<div class="t" style="left:1550.20px;top:126.30px;font-size:12px;line-height:14.40px;color:#ececec;letter-spacing:0.037px;">Clipboard</div>
<div class="t" style="left:1621.10px;top:126.30px;font-size:12px;line-height:14.40px;color:#ececec;letter-spacing:-0.273px;">View</div>
<svg style="position:absolute;left:1651.8px;top:131.25px;overflow:visible" width="8" height="4.5" viewBox="0 0 8 4.5"><polygon points="0,0 8,0 4.0,4.5" fill="#ececec"/></svg>
<svg style="position:absolute;left:1356px;top:129px;overflow:visible" width="7" height="7" viewBox="0 0 7 7"><path d="M1,1 L5.5,5.5 M5.5,2 V5.5 H2" stroke="#ddd" stroke-width="1.2" fill="none"/></svg>
<svg style="position:absolute;left:1666px;top:129px;overflow:visible" width="7" height="7" viewBox="0 0 7 7"><path d="M1,1 L5.5,5.5 M5.5,2 V5.5 H2" stroke="#ddd" stroke-width="1.2" fill="none"/></svg>
<svg style="position:absolute;left:4px;top:50px;overflow:visible" width="38" height="36" viewBox="0 0 38 36"><line x1="4.5" y1="32.5" x2="33.5" y2="3.5" stroke="#e6e6e6" stroke-width="1.1"/><rect x="3.0" y="31.0" width="3" height="3" fill="#68b6ee"/><rect x="32.0" y="2.0" width="3" height="3" fill="#68b6ee"/></svg>
<div class="t" style="left:12.50px;top:87.80px;font-size:12px;line-height:14.40px;color:#ececec;letter-spacing:-0.297px;">Line</div>
<svg style="position:absolute;left:48px;top:56px;overflow:visible" width="38" height="24" viewBox="0 0 38 24"><path d="M3.5,19.5 H23.5 C29,19.5 33.5,17 33.5,12 C33.5,7 29,4.5 23.5,4.5" fill="none" stroke="#e6e6e6" stroke-width="1.1"/><rect x="2.0" y="18.0" width="3" height="3" fill="#68b6ee"/><rect x="22.0" y="18.0" width="3" height="3" fill="#68b6ee"/><rect x="22.0" y="3.0" width="3" height="3" fill="#68b6ee"/></svg>
<div class="t" style="left:45.50px;top:87.80px;font-size:12px;line-height:14.40px;color:#ececec;letter-spacing:-0.065px;">Polyline</div>
<svg style="position:absolute;left:98px;top:50px;overflow:visible" width="36" height="36" viewBox="0 0 36 36"><circle cx="17.5" cy="17.5" r="15.3" fill="none" stroke="#e6e6e6" stroke-width="1.1"/><path d="M18,17 L25.5,9.5" stroke="#68b6ee" stroke-width="1.2"/><polygon points="27.5,7.5 22.2,9.2 25.8,12.8" fill="#68b6ee"/><rect x="16.0" y="16.0" width="3" height="3" fill="#68b6ee"/></svg>
<div class="t" style="left:101.00px;top:87.80px;font-size:12px;line-height:14.40px;color:#ececec;letter-spacing:-0.028px;">Circle</div>
<svg style="position:absolute;left:112.5px;top:104.75px;overflow:visible" width="6" height="3.5" viewBox="0 0 6 3.5"><polygon points="0,0 6,0 3.0,3.5" fill="#ececec"/></svg>
<div style="position:absolute;left:142px;top:49px;width:40px;height:72px;background:#2e3436"></div>
<div style="position:absolute;left:143px;top:50px;width:38px;height:35px;background:linear-gradient(#8a8c8c,#6c6e6e 55%,#646666)"></div>
<div style="position:absolute;left:143px;top:87px;width:38px;height:33px;background:linear-gradient(#6a6c6c,#7e8080)"></div>
<svg style="position:absolute;left:143px;top:50px;overflow:visible" width="38" height="36" viewBox="0 0 38 36"><path d="M6.5,32 C8,18 18,6.5 33,4.5" fill="none" stroke="#e6e6e6" stroke-width="1.1"/><rect x="5.0" y="30.5" width="3" height="3" fill="#68b6ee"/><rect x="32.0" y="3.0" width="3" height="3" fill="#68b6ee"/><rect x="13.0" y="11.0" width="3" height="3" fill="#68b6ee"/></svg>
<div class="t" style="left:152.50px;top:87.80px;font-size:12px;line-height:14.40px;color:#ececec;letter-spacing:0.167px;">Arc</div>
<svg style="position:absolute;left:158.5px;top:104.75px;overflow:visible" width="6" height="3.5" viewBox="0 0 6 3.5"><polygon points="0,0 6,0 3.0,3.5" fill="#ececec"/></svg>
<svg style="position:absolute;left:186px;top:54px;overflow:visible" width="18" height="14" viewBox="0 0 18 14"><path d="M2.5,2.5 H16.5 V11.5 H2.5 Z" fill="none" stroke="#e6e6e6" stroke-width="1.1"/><rect x="1.3" y="0.8" width="2.4" height="2.4" fill="#68b6ee"/><rect x="15.3" y="10.8" width="2.4" height="2.4" fill="#68b6ee"/></svg>
<svg style="position:absolute;left:209.75px;top:59.9px;overflow:visible" width="5.5" height="3.2" viewBox="0 0 5.5 3.2"><polygon points="0,0 5.5,0 2.75,3.2" fill="#ececec"/></svg>
<svg style="position:absolute;left:186px;top:77px;overflow:visible" width="18" height="16" viewBox="0 0 18 16"><ellipse cx="8.5" cy="8" rx="6.5" ry="4.5" fill="none" stroke="#e6e6e6" stroke-width="1.1"/><rect x="7.4" y="1.9" width="2.2" height="2.2" fill="#68b6ee"/><rect x="7.4" y="6.9" width="2.2" height="2.2" fill="#68b6ee"/><rect x="13.9" y="6.9" width="2.2" height="2.2" fill="#68b6ee"/></svg>
<svg style="position:absolute;left:209.75px;top:83.9px;overflow:visible" width="5.5" height="3.2" viewBox="0 0 5.5 3.2"><polygon points="0,0 5.5,0 2.75,3.2" fill="#ececec"/></svg>
<svg style="position:absolute;left:186px;top:101px;overflow:visible" width="18" height="18" viewBox="0 0 18 18"><rect x="3.5" y="3.5" width="10" height="10" fill="#3f7fb0"/><path d="M3.5,8 L8,3.5 M3.5,12 L12,3.5 M5.5,13.5 L13.5,5.5 M9.5,13.5 L13.5,9.5" stroke="#8fd0ff" stroke-width="1"/><path d="M3.5,0.5 V16.5 M13.5,0.5 V16.5 M0.5,3.5 H16.5 M0.5,13.5 H16.5" stroke="#e6e6e6" stroke-width="1.1"/></svg>
<svg style="position:absolute;left:209.75px;top:107.9px;overflow:visible" width="5.5" height="3.2" viewBox="0 0 5.5 3.2"><polygon points="0,0 5.5,0 2.75,3.2" fill="#ececec"/></svg>
<svg style="position:absolute;left:233px;top:53px;overflow:visible" width="16" height="16" viewBox="0 0 16 16"><path d="M7.75,2 V14 M2,7.75 H14" stroke="#e6e6e6" stroke-width="1.5"/><polygon points="7.75,-0.3 4.7,4 10.8,4" fill="#e6e6e6"/><polygon points="7.75,15.8 4.7,11.5 10.8,11.5" fill="#e6e6e6"/><polygon points="-0.3,7.75 4,4.7 4,10.8" fill="#e6e6e6"/><polygon points="15.8,7.75 11.5,4.7 11.5,10.8" fill="#e6e6e6"/></svg>
<div class="t" style="left:254.60px;top:53.80px;font-size:12px;line-height:14.40px;color:#ececec;letter-spacing:0.139px;">Move</div>
<svg style="position:absolute;left:233px;top:77px;overflow:visible" width="16" height="16" viewBox="0 0 16 16"><circle cx="3.6" cy="3.4" r="2.9" fill="none" stroke="#e6e6e6" stroke-width="1.1"/><path d="M8.5,2 H13.3 V5.5" fill="none" stroke="#e6e6e6" stroke-width="1.1"/><polygon points="13.3,7.6 11,4.6 15.6,4.6" fill="#e6e6e6"/><circle cx="7.3" cy="12.6" r="3" fill="none" stroke="#68b6ee" stroke-width="1.2"/><circle cx="12.7" cy="12.6" r="3" fill="none" stroke="#68b6ee" stroke-width="1.2"/></svg>
<div class="t" style="left:254.60px;top:77.80px;font-size:12px;line-height:14.40px;color:#ececec;letter-spacing:-0.153px;">Copy</div>
<svg style="position:absolute;left:233px;top:101px;overflow:visible" width="17" height="17" viewBox="0 0 17 17"><path d="M0.5,0.5 H7.5 V15.5 H0.5 Z" fill="none" stroke="#e6e6e6" stroke-width="1.1"/><path d="M8.5,0.5 H11 L15.5,15.5 H8.5" fill="none" stroke="#68b6ee" stroke-width="1.1"/><path d="M4.5,11.5 H10" stroke="#e6e6e6" stroke-width="1.2"/><polygon points="12,11.5 9,9.3 9,13.7" fill="#e6e6e6"/></svg>
<div class="t" style="left:254.60px;top:101.80px;font-size:12px;line-height:14.40px;color:#ececec;letter-spacing:-0.231px;">Stretch</div>
<svg style="position:absolute;left:305px;top:53px;overflow:visible" width="16" height="16" viewBox="0 0 16 16"><path d="M9.5,3.2 A6.2,6.2 0 1 0 14.5,8.5" fill="none" stroke="#e6e6e6" stroke-width="1.2"/><polygon points="8.5,0 13,3 8.5,6" fill="#e6e6e6"/></svg>
<div class="t" style="left:326.50px;top:53.80px;font-size:12px;line-height:14.40px;color:#ececec;letter-spacing:-0.309px;">Rotate</div>
<svg style="position:absolute;left:305px;top:77px;overflow:visible" width="16" height="16" viewBox="0 0 16 16"><path d="M6.6,1.5 V14.6 H0.6 Z" fill="none" stroke="#e6e6e6" stroke-width="1.1"/><path d="M8.6,1.5 V14.6 H14.8 Z" fill="none" stroke="#68b6ee" stroke-width="1.1"/></svg>
<div class="t" style="left:326.50px;top:77.80px;font-size:12px;line-height:14.40px;color:#ececec;letter-spacing:0.196px;">Mirror</div>
<svg style="position:absolute;left:305px;top:101px;overflow:visible" width="16" height="16" viewBox="0 0 16 16"><path d="M0.5,15.5 V0.5 H15.5 V15.5 H11" fill="none" stroke="#68b6ee" stroke-width="1.1"/><rect x="0.5" y="7.5" width="8" height="8" fill="none" stroke="#e6e6e6" stroke-width="1.1"/></svg>
<div class="t" style="left:326.50px;top:101.80px;font-size:12px;line-height:14.40px;color:#ececec;letter-spacing:-0.604px;">Scale</div>
<svg style="position:absolute;left:374px;top:52px;overflow:visible" width="17" height="18" viewBox="0 0 17 18"><path d="M0.5,2.5 H8" stroke="#68b6ee" stroke-width="1.2" stroke-dasharray="1.5,1"/><path d="M12,2.5 H16.5" stroke="#e6e6e6" stroke-width="1.2"/><path d="M5,2 L11,13 M12.5,2 L7.5,13" stroke="#e6e6e6" stroke-width="1.6"/><circle cx="8" cy="15" r="1.9" fill="none" stroke="#e6e6e6" stroke-width="1.1"/><circle cx="12.5" cy="13.5" r="1.9" fill="none" stroke="#e6e6e6" stroke-width="1.1"/></svg>
<div class="t" style="left:395.60px;top:53.80px;font-size:12px;line-height:14.40px;color:#ececec;letter-spacing:-0.286px;">Trim</div>
<svg style="position:absolute;left:428.85px;top:59.9px;overflow:visible" width="5.5" height="3.2" viewBox="0 0 5.5 3.2"><polygon points="0,0 5.5,0 2.75,3.2" fill="#ececec"/></svg>
<svg style="position:absolute;left:374px;top:76px;overflow:visible" width="17" height="17" viewBox="0 0 17 17"><path d="M0.7,10 C1,4 4.5,1 10,0.8" fill="none" stroke="#68b6ee" stroke-width="1.2"/><path d="M0.7,11.5 V16.5 M11.5,0.8 H16.5" stroke="#e6e6e6" stroke-width="1.2"/></svg>
<div class="t" style="left:395.60px;top:77.80px;font-size:12px;line-height:14.40px;color:#ececec;letter-spacing:-0.156px;">Fillet</div>
<svg style="position:absolute;left:430.75px;top:83.9px;overflow:visible" width="5.5" height="3.2" viewBox="0 0 5.5 3.2"><polygon points="0,0 5.5,0 2.75,3.2" fill="#ececec"/></svg>
<svg style="position:absolute;left:374px;top:101px;overflow:visible" width="16" height="16" viewBox="0 0 16 16"><rect x="1" y="1.5" width="5" height="4.5" fill="none" stroke="#e6e6e6" stroke-width="1.1"/><rect x="9" y="1.5" width="5" height="4.5" fill="none" stroke="#68b6ee" stroke-width="1.1"/><rect x="1" y="9.5" width="5" height="4.5" fill="none" stroke="#68b6ee" stroke-width="1.1"/><rect x="9" y="9.5" width="5" height="4.5" fill="none" stroke="#68b6ee" stroke-width="1.1"/></svg>
<div class="t" style="left:395.60px;top:101.80px;font-size:12px;line-height:14.40px;color:#ececec;letter-spacing:-0.254px;">Array</div>
<svg style="position:absolute;left:430.75px;top:107.9px;overflow:visible" width="5.5" height="3.2" viewBox="0 0 5.5 3.2"><polygon points="0,0 5.5,0 2.75,3.2" fill="#ececec"/></svg>
<svg style="position:absolute;left:449px;top:52px;overflow:visible" width="17" height="18" viewBox="0 0 17 18"><path d="M7.5,11 L14.5,1.2 L16.6,2.8 L16,8 L10.5,13.5 Z" fill="#f2c070"/><path d="M5.5,12.8 L7.5,10.2 L10.8,12.8 L8.6,15.4 Z" fill="#f4f4f4"/><path d="M3.8,15.2 L5.5,12.8 L8.6,15.4 L7,17 C5.5,17.5 4,16.8 3.8,15.2 Z" fill="#b86a4a"/><path d="M0.5,17 H2.5" stroke="#e6e6e6" stroke-width="1"/><path d="M8.5,17 H16" stroke="#68b6ee" stroke-width="1"/></svg>
<svg style="position:absolute;left:449px;top:77px;overflow:visible" width="17" height="16" viewBox="0 0 17 16"><path d="M0.8,5.5 L5,1 H16 L12,5.5 Z M12,5.5 L16,1 V11 L12,15 Z" fill="none" stroke="#68b6ee" stroke-width="1"/><rect x="2.5" y="7.5" width="8" height="7.5" fill="none" stroke="#e6e6e6" stroke-width="1.1"/><path d="M0.8,5.5 V15" stroke="#68b6ee" stroke-width="1"/></svg>
<svg style="position:absolute;left:449px;top:102px;overflow:visible" width="17" height="14" viewBox="0 0 17 14"><path d="M16,0.7 H6.5 A6,6 0 0 0 6.5,12.7 H16" fill="none" stroke="#68b6ee" stroke-width="1.2"/><path d="M16,3.6 H7 A3.1,3.1 0 0 0 7,9.8 H16" fill="none" stroke="#68b6ee" stroke-width="1.2"/><path d="M16,6.7 H9" stroke="#e6e6e6" stroke-width="1.1"/></svg>
<svg style="position:absolute;left:486px;top:54px;overflow:visible" width="28" height="28" viewBox="0 0 28 28"><path d="M11,0 H16 L27,27.5 H22.5 L19.5,19.5 H7.5 L4.5,27.5 H0.5 Z M13.5,4.2 L8.8,16.2 H18.2 Z" fill="#e4e4e4"/></svg>
<div class="t" style="left:490.00px;top:87.80px;font-size:12px;line-height:14.40px;color:#ececec;letter-spacing:-0.377px;">Text</div>
<svg style="position:absolute;left:496.5px;top:104.75px;overflow:visible" width="6" height="3.5" viewBox="0 0 6 3.5"><polygon points="0,0 6,0 3.0,3.5" fill="#ececec"/></svg>
<svg style="position:absolute;left:535px;top:51px;overflow:visible" width="34" height="34" viewBox="0 0 34 34"><path d="M1.5,0.5 V33 M32.5,0.5 V33" stroke="#e6e6e6" stroke-width="1.1"/><path d="M3,7.5 H31" stroke="#e6e6e6" stroke-width="1.1"/><polygon points="2.5,7.5 7,5.2 7,9.8" fill="#e6e6e6"/><polygon points="31.5,7.5 27,5.2 27,9.8" fill="#e6e6e6"/><polygon points="17,15.5 15.2,22.5 18.8,22.5" fill="#f2c070"/><polygon points="7.8,19.5 10.5,26 13.5,23.8" fill="#f2c070"/><polygon points="26.2,19.5 23.5,26 20.5,23.8" fill="#f2c070"/><polygon points="4,30 11,27 11.5,30.5" fill="#f2c070"/><polygon points="30,30 23,27 22.5,30.5" fill="#f2c070"/></svg>
<div class="t" style="left:524.50px;top:87.80px;font-size:12px;line-height:14.40px;color:#ececec;letter-spacing:-0.021px;">Dimension</div>
<svg style="position:absolute;left:588px;top:52px;overflow:visible" width="18" height="18" viewBox="0 0 18 18"><path d="M1,4 L5.5,0.5 M12.5,17 L17,13.5" stroke="#e6e6e6" stroke-width="1.1"/><path d="M3.5,2.5 L14.5,15" stroke="#68b6ee" stroke-width="1.2"/><polygon points="3,2 6.6,3.6 4.6,5.3" fill="#68b6ee"/><polygon points="15,15.5 11.4,13.9 13.4,12.2" fill="#68b6ee"/></svg>
<div class="t" style="left:610.00px;top:53.80px;font-size:12px;line-height:14.40px;color:#ececec;letter-spacing:0.067px;">Aligned</div>
<svg style="position:absolute;left:658.75px;top:59.9px;overflow:visible" width="5.5" height="3.2" viewBox="0 0 5.5 3.2"><polygon points="0,0 5.5,0 2.75,3.2" fill="#ececec"/></svg>
<svg style="position:absolute;left:588px;top:76px;overflow:visible" width="18" height="18" viewBox="0 0 18 18"><circle cx="13" cy="4.5" r="3.3" fill="none" stroke="#e6e6e6" stroke-width="1.1"/><path d="M9.8,5.5 C7,6 5.5,8 2.5,14" fill="none" stroke="#e6e6e6" stroke-width="1.1"/><polygon points="1,17 1.6,11.8 5.4,13.8" fill="#e6e6e6"/></svg>
<div class="t" style="left:610.00px;top:77.80px;font-size:12px;line-height:14.40px;color:#ececec;letter-spacing:-0.394px;">Leader</div>
<svg style="position:absolute;left:652.75px;top:83.9px;overflow:visible" width="5.5" height="3.2" viewBox="0 0 5.5 3.2"><polygon points="0,0 5.5,0 2.75,3.2" fill="#ececec"/></svg>
<svg style="position:absolute;left:589px;top:102px;overflow:visible" width="17" height="14" viewBox="0 0 17 14"><path d="M0.5,0.5 H15.5 V13.5 H0.5 Z M0.5,3.8 H15.5 M0.5,7 H15.5 M0.5,10.2 H15.5 M5.5,3.8 V13.5 M10.5,3.8 V13.5" fill="none" stroke="#e6e6e6" stroke-width="1.1"/><rect x="0.5" y="0.5" width="15" height="3" fill="#e6e6e6"/></svg>
<div class="t" style="left:610.00px;top:101.80px;font-size:12px;line-height:14.40px;color:#ececec;letter-spacing:-0.237px;">Table</div>
<svg style="position:absolute;left:685px;top:52px;overflow:visible" width="34" height="33" viewBox="0 0 34 33"><polygon points="8.5,13 28.2,13 19.4,24.5 0.4,24.5" fill="#bcbebe" stroke="#5d5d5d" stroke-width="1"/><polygon points="8.5,6.5 28.2,6.5 19.4,18.2 0.4,18.2" fill="#cacccc" stroke="#5d5d5d" stroke-width="1"/><polygon points="8.5,0 28.2,0 19.4,11.7 0.4,11.7" fill="#dcdede" stroke="#5d5d5d" stroke-width="1"/><rect x="20" y="14" width="13.5" height="18.5" rx="1" fill="#efefef"/><rect x="22" y="16.2" width="9.5" height="7.2" fill="#5ab4f0"/><path d="M23,26.5 H30 M28,25 l2,1.5 M31,29.5 H24 M26,31 l-2,-1.5" stroke="#555" stroke-width="1" fill="none"/><rect x="24.5" y="12.5" width="4.5" height="1.5" fill="#e0e0e0"/></svg>
<div class="t" style="left:689.00px;top:87.80px;font-size:12px;line-height:14.40px;color:#ececec;letter-spacing:-0.424px;">Layer</div>
<div class="t" style="left:676.40px;top:102.30px;font-size:12px;line-height:14.40px;color:#ececec;letter-spacing:-0.229px;">Properties</div>
<div style="position:absolute;left:733px;top:50px;width:208px;height:22px;background:#4e4e4e;border:1px solid #2c2c2c;box-sizing:border-box;background-image:linear-gradient(#585858,#4a4a4a)"></div>
<svg style="position:absolute;left:739px;top:53px;overflow:visible" width="12" height="16" viewBox="0 0 12 16"><path d="M6,1 C9.2,1 11,3.3 11,6 C11,8.2 9.5,9.3 8.6,11 H3.4 C2.5,9.3 1,8.2 1,6 C1,3.3 2.8,1 6,1 Z" fill="#f6c97c"/><path d="M3.6,11.5 H8.4 V13 C8.4,14.5 7.4,15.2 6,15.2 C4.6,15.2 3.6,14.5 3.6,13 Z" fill="#f2f2f2"/></svg>
<svg style="position:absolute;left:755px;top:53px;overflow:visible" width="17" height="16" viewBox="0 0 17 16"><circle cx="8.5" cy="8" r="4" fill="#f6c97c"/><path d="M8.5,0.5 V2.8 M8.5,13.2 V15.5 M1,8 H3.3 M13.7,8 H16 M3.2,2.7 L4.8,4.3 M12.2,11.7 L13.8,13.3 M13.8,2.7 L12.2,4.3 M4.8,11.7 L3.2,13.3" stroke="#f6c97c" stroke-width="1.2"/></svg>
<svg style="position:absolute;left:775px;top:52px;overflow:visible" width="16" height="17" viewBox="0 0 16 17"><path d="M8.5,8 V4.8 C8.5,2.6 9.8,1.5 11.5,1.5 C13.2,1.5 14.5,2.6 14.5,4.8 V6" fill="none" stroke="#f6c97c" stroke-width="1.8"/><rect x="1" y="8" width="10.5" height="8" fill="#f6c97c"/><rect x="5.5" y="10.5" width="1.6" height="3" fill="#6a5a3a"/></svg>
<div style="position:absolute;left:796px;top:55px;width:14px;height:14px;background:#00e600;border:1.5px solid #111;box-sizing:border-box"></div>
<div class="t" style="left:815.50px;top:53.80px;font-size:12px;line-height:14.40px;color:#ececec;letter-spacing:-1.467px;">TEXT</div>
<svg style="position:absolute;left:930.95px;top:59.4px;overflow:visible" width="7.5" height="4.2" viewBox="0 0 7.5 4.2"><polygon points="0,0 7.5,0 3.75,4.2" fill="#ececec"/></svg>
<svg style="position:absolute;left:737px;top:77px;overflow:visible" width="17" height="17" viewBox="0 0 17 17"><polygon points="4.5,1.5 14.0,1.5 9.5,6.7 0,6.7" fill="#d4d6d6"/><circle cx="12.8" cy="9.3" r="3.3" fill="#4aa8d8"/><rect x="11.5" y="12.8" width="2.6" height="2.6" rx="0.8" fill="#f2f2f2"/><path d="M11,8.5 a2,2 0 0 1 3.2,0" stroke="#3fc08a" stroke-width="1" fill="none"/></svg>
<svg style="position:absolute;left:761px;top:77px;overflow:visible" width="17" height="17" viewBox="0 0 17 17"><polygon points="4.5,0.5 14.0,0.5 9.5,3.6 0,3.6" fill="#d4d6d6"/><polygon points="4.5,4.2 14.0,4.2 9.5,7.300000000000001 0,7.300000000000001" fill="#c8caca"/><polygon points="4.5,7.9 14.0,7.9 9.5,11.0 0,11.0" fill="#68b6ee"/><path d="M15.5,9.5 L10,15" stroke="#e6e6e6" stroke-width="1.3"/><polygon points="8.7,16.3 9.3,12.2 12.8,15.7" fill="#e6e6e6"/></svg>
<svg style="position:absolute;left:785px;top:77px;overflow:visible" width="17" height="17" viewBox="0 0 17 17"><polygon points="4.5,1.5 14.0,1.5 9.5,6.7 0,6.7" fill="#d4d6d6"/><g stroke="#4aa8e8" stroke-width="1.1"><path d="M12,6.5 V15.5 M8.1,8.7 L15.9,13.3 M15.9,8.7 L8.1,13.3"/></g><circle cx="12" cy="11" r="2.6" fill="none" stroke="#4aa8e8" stroke-width="0.9"/></svg>
<svg style="position:absolute;left:809px;top:77px;overflow:visible" width="17" height="17" viewBox="0 0 17 17"><polygon points="4.5,1.5 14.0,1.5 9.5,6.7 0,6.7" fill="#d4d6d6"/><path d="M10.3,10.8 V9.4 C10.3,6.6 14.7,6.6 14.7,9.4 V10.8" fill="none" stroke="#58b4f0" stroke-width="1.3"/><rect x="8.5" y="10.8" width="8" height="5.8" fill="#58b4f0"/><rect x="11.9" y="12.399999999999999" width="1.2" height="2.4" fill="#555"/></svg>
<svg style="position:absolute;left:833px;top:76px;overflow:visible" width="17" height="18" viewBox="0 0 17 18"><circle cx="8.5" cy="3.8" r="3.2" fill="#c8caca"/><polygon points="5.0,5.5 17.0,5.5 12.5,9.7 0.5,9.7" fill="#68b6ee"/><polygon points="5.0,11 17.0,11 12.5,13.6 0.5,13.6" fill="#d0d2d2"/><polygon points="5.0,14.4 17.0,14.4 12.5,17.0 0.5,17.0" fill="#c4c6c6"/></svg>
<div class="t" style="left:854.50px;top:77.80px;font-size:12px;line-height:14.40px;color:#ececec;letter-spacing:-0.099px;">Make Current</div>
<svg style="position:absolute;left:737px;top:101px;overflow:visible" width="17" height="17" viewBox="0 0 17 17"><polygon points="4.5,0.5 14.0,0.5 9.5,3.6 0,3.6" fill="#d4d6d6"/><polygon points="4.5,4.2 14.0,4.2 9.5,7.300000000000001 0,7.300000000000001" fill="#c8caca"/><polygon points="4.5,7.9 14.0,7.9 9.5,11.0 0,11.0" fill="#bcbebe"/><circle cx="12.8" cy="9.6" r="3.3" fill="#f6c97c"/><rect x="11.5" y="13.1" width="2.6" height="2.6" rx="0.8" fill="#f2f2f2"/></svg>
<svg style="position:absolute;left:761px;top:101px;overflow:visible" width="17" height="17" viewBox="0 0 17 17"><polygon points="4.5,0.5 14.0,0.5 9.5,3.6 0,3.6" fill="#d4d6d6"/><polygon points="4.5,4.2 14.0,4.2 9.5,7.300000000000001 0,7.300000000000001" fill="#c8caca"/><polygon points="4.5,7.9 14.0,7.9 9.5,11.0 0,11.0" fill="#68b6ee"/><path d="M9,16 L14.5,10.5" stroke="#e6e6e6" stroke-width="1.3"/><polygon points="16,9 15.4,13.1 11.9,9.6" fill="#e6e6e6"/></svg>
<svg style="position:absolute;left:785px;top:101px;overflow:visible" width="17" height="17" viewBox="0 0 17 17"><polygon points="4.5,0.5 14.0,0.5 9.5,3.6 0,3.6" fill="#d4d6d6"/><polygon points="4.5,4.2 14.0,4.2 9.5,7.300000000000001 0,7.300000000000001" fill="#c8caca"/><polygon points="4.5,7.9 14.0,7.9 9.5,11.0 0,11.0" fill="#bcbebe"/><circle cx="12" cy="12" r="2.3" fill="#f6c97c"/><circle cx="12" cy="12" r="4.3" fill="none" stroke="#f6c97c" stroke-width="1.2" stroke-dasharray="1.2,1.6"/></svg>
<svg style="position:absolute;left:809px;top:101px;overflow:visible" width="17" height="17" viewBox="0 0 17 17"><polygon points="4.5,1.5 14.0,1.5 9.5,6.7 0,6.7" fill="#d4d6d6"/><path d="M11.8,11.2 V9.5 C11.8,6.7 16.2,6.7 16.2,9.5 V10.2" fill="none" stroke="#f6c97c" stroke-width="1.3"/><rect x="7" y="11.2" width="8" height="5.8" fill="#f6c97c"/><rect x="10.4" y="12.8" width="1.2" height="2.4" fill="#555"/></svg>
<svg style="position:absolute;left:833px;top:101px;overflow:visible" width="17" height="17" viewBox="0 0 17 17"><polygon points="4.5,0.5 14.0,0.5 9.5,3.6 0,3.6" fill="#d4d6d6"/><polygon points="4.5,4.2 14.0,4.2 9.5,7.300000000000001 0,7.300000000000001" fill="#c8caca"/><polygon points="4.5,7.9 14.0,7.9 9.5,11.0 0,11.0" fill="#bcbebe"/><path d="M7.5,11.5 L11.5,8 L15.2,12 L11,15.8 Z" fill="#f0c060"/><path d="M11.5,8 L13.2,6.2 L16.8,10 L15.2,12 Z" fill="#f4f4f4"/></svg>
<div class="t" style="left:854.50px;top:101.80px;font-size:12px;line-height:14.40px;color:#ececec;letter-spacing:-0.121px;">Match Layer</div>
<svg style="position:absolute;left:949px;top:49px;overflow:visible" width="33" height="34" viewBox="0 0 33 34"><path d="M15,1 H28 L32.5,5.5 V24 H15 Z" fill="#6abcf2"/><path d="M28,1 V5.5 H32.5 Z" fill="#d8ecfa"/><rect x="1.5" y="10.5" width="20.5" height="14" fill="#777" stroke="#d8d8d8" stroke-width="1.2"/><circle cx="22" cy="24" r="7.3" fill="#7a7a7a" fill-opacity="0.85" stroke="#d8d8d8" stroke-width="1.2"/><rect x="0" y="23" width="3" height="3" fill="#e0e0e0"/></svg>
<div class="t" style="left:951.40px;top:87.80px;font-size:12px;line-height:14.40px;color:#ececec;letter-spacing:-0.285px;">Insert</div>
<svg style="position:absolute;left:962.6px;top:103.75px;overflow:visible" width="6" height="3.5" viewBox="0 0 6 3.5"><polygon points="0,0 6,0 3.0,3.5" fill="#ececec"/></svg>
<svg style="position:absolute;left:989px;top:52px;overflow:visible" width="16" height="16" viewBox="0 0 16 16"><rect x="1.5" y="5.5" width="9" height="7" fill="#808080" stroke="#d0d0d0" stroke-width="1"/><circle cx="10.5" cy="12" r="2.9" fill="#777" stroke="#d0d0d0" stroke-width="1"/><rect x="0" y="11.5" width="2.4" height="2.4" fill="#ddd"/><g stroke="#f6c060" stroke-width="1.4"><path d="M11.5,0 V8 M7.5,4 H15.5 M8.7,1.2 L14.3,6.8 M14.3,1.2 L8.7,6.8"/></g></svg>
<div class="t" style="left:1010.60px;top:53.80px;font-size:12px;line-height:14.40px;color:#ececec;letter-spacing:-0.420px;">Create</div>
<svg style="position:absolute;left:989px;top:76px;overflow:visible" width="16" height="16" viewBox="0 0 16 16"><rect x="1.5" y="5.5" width="9" height="7" fill="#808080" stroke="#d0d0d0" stroke-width="1"/><circle cx="10.5" cy="12" r="2.9" fill="#777" stroke="#d0d0d0" stroke-width="1"/><rect x="0" y="11.5" width="2.4" height="2.4" fill="#ddd"/><path d="M7,8 L12,2.5 L14.5,4.6 L9.5,10.2 L6.4,11 Z" fill="#f4c878"/><path d="M12,2.5 L13.2,1 L15.8,3.2 L14.5,4.6 Z" fill="#c07848"/></svg>
<div class="t" style="left:1010.60px;top:77.80px;font-size:12px;line-height:14.40px;color:#ececec;letter-spacing:-0.369px;">Edit</div>
<svg style="position:absolute;left:989px;top:101px;overflow:visible" width="16" height="16" viewBox="0 0 16 16"><path d="M0.8,1 H6 L14,8.5 L7.5,14.8 L0.8,7.5 Z" fill="none" stroke="#ddd" stroke-width="1.6"/><path d="M3,4 h2 M3.5,6.5 l4,4" stroke="#ddd" stroke-width="1.1"/><path d="M7.2,7.5 L12.2,2.0 L14.7,4.1 L9.7,9.7 L6.6000000000000005,10.5 Z" fill="#f4c878"/><path d="M12.2,2.0 L13.399999999999999,0.5 L16.0,2.7 L14.7,4.1 Z" fill="#c07848"/></svg>
<div class="t" style="left:1010.60px;top:101.80px;font-size:12px;line-height:14.40px;color:#ececec;letter-spacing:0.024px;">Edit Attributes</div>
<svg style="position:absolute;left:1092.55px;top:107.9px;overflow:visible" width="5.5" height="3.2" viewBox="0 0 5.5 3.2"><polygon points="0,0 5.5,0 2.75,3.2" fill="#ececec"/></svg>
<svg style="position:absolute;left:1121px;top:52px;overflow:visible" width="32" height="33" viewBox="0 0 32 33"><rect x="1" y="0.5" width="20" height="28" rx="0.5" fill="#dedede"/><rect x="3.8" y="3.5" width="14" height="9.5" fill="#6abcf2"/><path d="M4,18.5 H14 M4,24 H14 M7.5,16.5 V20.5 M11.5,22 V26" stroke="#555" stroke-width="1.1"/><path d="M14.5,24 L21.5,17.5 L28,25 L21.5,31.5 Z" fill="#f4c878"/><path d="M21.5,17.5 L25,14 L31.5,21 L28,25 Z" fill="#f0f0f0"/><path d="M26,14.5 l3,-2.5 l2.2,2.4 l-2.8,2.6" fill="#f0f0f0"/></svg>
<div class="t" style="left:1120.70px;top:87.80px;font-size:12px;line-height:14.40px;color:#ececec;letter-spacing:0.044px;">Match</div>
<div class="t" style="left:1110.50px;top:102.30px;font-size:12px;line-height:14.40px;color:#ececec;letter-spacing:-0.219px;">Properties</div>
<svg style="position:absolute;left:1169px;top:52px;overflow:visible" width="16" height="16" viewBox="0 0 16 16"><circle cx="8" cy="8" r="8" fill="#888"/><path d="M8,8 L8,0 A8,8 0 0 1 14.9,4 Z" fill="#e8c838"/><path d="M8,8 L14.9,4 A8,8 0 0 1 14.9,12 Z" fill="#d84a3a"/><path d="M8,8 L14.9,12 A8,8 0 0 1 8,16 Z" fill="#8a4ae8"/><path d="M8,8 L8,16 A8,8 0 0 1 1.1,12 Z" fill="#6a48f0"/><path d="M8,8 L1.1,12 A8,8 0 0 1 1.1,4 Z" fill="#5a9ae0"/><path d="M8,8 L1.1,4 A8,8 0 0 1 8,0 Z" fill="#4ac878"/></svg>
<svg style="position:absolute;left:1169px;top:76px;overflow:visible" width="16" height="16" viewBox="0 0 16 16"><rect x="0" y="0.5" width="16" height="3.6" fill="#e8e8e8"/><rect x="0" y="6.2" width="16" height="3.6" fill="#e8e8e8"/><rect x="0" y="12" width="16" height="3.6" fill="#e8e8e8"/></svg>
<svg style="position:absolute;left:1169px;top:101px;overflow:visible" width="16" height="14" viewBox="0 0 16 14"><path d="M0,1 H16" stroke="#e0e0e0" stroke-width="1.2" stroke-dasharray="1,1"/><path d="M0,4.5 H16" stroke="#e0e0e0" stroke-width="1.2" stroke-dasharray="3,1"/><path d="M0,8 H16" stroke="#e0e0e0" stroke-width="1.2" stroke-dasharray="5,1.5,2,1.5"/><path d="M0,11.5 H16" stroke="#e0e0e0" stroke-width="1.2" stroke-dasharray="2,1"/></svg>
<div style="position:absolute;left:1187px;top:50px;width:180px;height:22px;border:1px solid #2c2c2c;box-sizing:border-box;background-image:linear-gradient(#585858,#4b4b4b)"></div>
<svg style="position:absolute;left:1356.95px;top:59.4px;overflow:visible" width="7.5" height="4.2" viewBox="0 0 7.5 4.2"><polygon points="0,0 7.5,0 3.75,4.2" fill="#ececec"/></svg>
<div style="position:absolute;left:1187px;top:73px;width:180px;height:22px;border:1px solid #2c2c2c;box-sizing:border-box;background-image:linear-gradient(#585858,#4b4b4b)"></div>
<svg style="position:absolute;left:1356.95px;top:82.4px;overflow:visible" width="7.5" height="4.2" viewBox="0 0 7.5 4.2"><polygon points="0,0 7.5,0 3.75,4.2" fill="#ececec"/></svg>
<div style="position:absolute;left:1187px;top:97px;width:180px;height:22px;border:1px solid #2c2c2c;box-sizing:border-box;background-image:linear-gradient(#585858,#4b4b4b)"></div>
<svg style="position:absolute;left:1356.95px;top:106.4px;overflow:visible" width="7.5" height="4.2" viewBox="0 0 7.5 4.2"><polygon points="0,0 7.5,0 3.75,4.2" fill="#ececec"/></svg>
<div style="position:absolute;left:1200px;top:53px;width:16px;height:16px;background:#fdfdfb"></div>
<div class="t" style="left:1226.60px;top:53.80px;font-size:12px;line-height:14.40px;color:#ececec;letter-spacing:-0.321px;">ByBlock</div>
<div style="position:absolute;left:1192px;top:83px;width:64px;height:1px;background:#e8e8e8"></div>
<div class="t" style="left:1256.70px;top:76.80px;font-size:12px;line-height:14.40px;color:#ececec;letter-spacing:-0.389px;">ByLayer</div>
<div style="position:absolute;left:1192px;top:107px;width:64px;height:1px;background:#e8e8e8"></div>
<div class="t" style="left:1256.70px;top:100.80px;font-size:12px;line-height:14.40px;color:#ececec;letter-spacing:-1.024px;">BYLAYER</div>
<svg style="position:absolute;left:1374px;top:51px;overflow:visible" width="32" height="34" viewBox="0 0 32 34"><path d="M5,3.5 H1.5 V31 H5 M19,31 H22.5 V16" fill="none" stroke="#e2e2e2" stroke-width="1.6"/><rect x="7" y="8" width="10" height="8.5" fill="none" stroke="#68b6ee" stroke-width="1.8"/><circle cx="11.5" cy="24" r="5" fill="#777" stroke="#bbb" stroke-width="1.6"/><g stroke="#f6c060" stroke-width="2.2"><path d="M23.5,0 V16 M15.5,8 H31.5 M17.8,2.3 L29.2,13.7 M29.2,2.3 L17.8,13.7"/></g><circle cx="23.5" cy="8" r="3.4" fill="#fae0a0"/></svg>
<div class="t" style="left:1375.50px;top:87.80px;font-size:12px;line-height:14.40px;color:#ececec;letter-spacing:-0.230px;">Group</div>
<svg style="position:absolute;left:1416px;top:53px;overflow:visible" width="16" height="16" viewBox="0 0 16 16"><path d="M3,0.8 H1 V15 H3 M12,0.8 H14 V15 H12" fill="none" stroke="#ddd" stroke-width="1"/><rect x="3.5" y="2" width="5" height="4.2" fill="none" stroke="#68b6ee" stroke-width="1.2"/><circle cx="6" cy="11" r="2.5" fill="#777" stroke="#bbb" stroke-width="1"/><path d="M10,5 L15.5,10.5 M15.5,5 L10,10.5" stroke="#d8683a" stroke-width="1.5"/></svg>
<svg style="position:absolute;left:1416px;top:77px;overflow:visible" width="16" height="16" viewBox="0 0 16 16"><path d="M3,0.8 H1 V15 H3 M12,0.8 H14 V15 H12" fill="none" stroke="#ddd" stroke-width="1"/><rect x="3.5" y="2" width="5" height="4.2" fill="none" stroke="#68b6ee" stroke-width="1.2"/><circle cx="6" cy="11" r="2.5" fill="#777" stroke="#bbb" stroke-width="1"/><path d="M8.5,12.5 L12.5,8 L15,10.2 L11,14.6 L8,15.4 Z" fill="#f4c878"/><path d="M12.5,8 L13.5,6.8 L16,9 L15,10.2 Z" fill="#c07848"/></svg>
<div style="position:absolute;left:1412px;top:98px;width:24px;height:22px;background:#3d69b0;border:1px solid #1e2a3a;box-sizing:border-box;background-image:linear-gradient(#7098d0,#4874b8 50%,#3c62a2)"></div>
<svg style="position:absolute;left:1416px;top:101px;overflow:visible" width="16" height="16" viewBox="0 0 16 16"><path d="M3,0.8 H1 V15 H3" fill="none" stroke="#eee" stroke-width="1.1"/><rect x="3.5" y="2" width="5" height="4.2" fill="none" stroke="#7adf9a" stroke-width="1.2"/><circle cx="6" cy="11" r="2.5" fill="none" stroke="#7adf9a" stroke-width="1.2"/><path d="M8.5,3 V14 L11,11.5 L13,15.8 L14.6,15 L12.6,10.8 H16 Z" fill="#fafafa" stroke="#444" stroke-width="0.5"/></svg>
<svg style="position:absolute;left:1460px;top:59px;overflow:visible" width="30" height="18" viewBox="0 0 30 18"><path d="M1.5,0.5 V9 M28.5,0.5 V9" stroke="#e6e6e6" stroke-width="1.1"/><path d="M3,4.7 H27" stroke="#e6e6e6" stroke-width="1.1"/><polygon points="2.5,4.7 6.5,2.7 6.5,6.7" fill="#e6e6e6"/><polygon points="27.5,4.7 23.5,2.7 23.5,6.7" fill="#e6e6e6"/><rect x="1" y="11" width="28" height="6.5" fill="#f4c860"/><path d="M4,11 v2.5 M7,11 v2.5 M10,11 v3.5 M13,11 v2.5 M16,11 v2.5 M19,11 v3.5 M22,11 v2.5 M25,11 v2.5" stroke="#b89030" stroke-width="0.9"/></svg>
<div class="t" style="left:1452.40px;top:87.80px;font-size:12px;line-height:14.40px;color:#ececec;letter-spacing:-0.270px;">Measure</div>
<svg style="position:absolute;left:1471.8px;top:104.75px;overflow:visible" width="6" height="3.5" viewBox="0 0 6 3.5"><polygon points="0,0 6,0 3.0,3.5" fill="#ececec"/></svg>
<svg style="position:absolute;left:1512px;top:52px;overflow:visible" width="18" height="18" viewBox="0 0 18 18"><path d="M1,6 V17 L4,14 L6,18 L8,17 L6,13 H10 Z" fill="#f4f4f4"/><rect x="9" y="8.5" width="8.5" height="8" fill="#e4e4e4"/><path d="M10.5,10.5 h1 M12.5,10.5 h4 M10.5,12.5 h1 M12.5,12.5 h4 M10.5,14.5 h1 M12.5,14.5 h4" stroke="#3a78c0" stroke-width="0.9"/><path d="M11,0 L8,4.5 H10.5 L9,8 L14,3 H11.5 L13.5,0 Z" fill="#f6c060"/></svg>
<svg style="position:absolute;left:1512px;top:77px;overflow:visible" width="18" height="17" viewBox="0 0 18 17"><rect x="0.8" y="0.8" width="14" height="14" rx="1" fill="none" stroke="#4ac878" stroke-width="1.2" stroke-dasharray="1.6,1"/><rect x="5.5" y="3" width="7" height="7" fill="none" stroke="#4ac878" stroke-width="1.4"/><rect x="3" y="5.8" width="7" height="7" fill="#3a9a5a" stroke="#4ac878" stroke-width="1.4"/><path d="M9.5,6 V16 L12,13.8 L13.8,17.6 L15.4,16.8 L13.6,13 H16.6 Z" fill="#f6f6f6" stroke="#444" stroke-width="0.5"/></svg>
<svg style="position:absolute;left:1514px;top:101px;overflow:visible" width="13" height="17" viewBox="0 0 13 17"><rect x="0" y="0" width="13" height="16.5" rx="1" fill="#dadada"/><rect x="1.8" y="1.8" width="9.4" height="3.4" fill="#5a5a5a"/><g fill="#5a5a5a"><rect x="1.8" y="7" width="2.4" height="2"/><rect x="5.3" y="7" width="2.4" height="2"/><rect x="8.8" y="7" width="2.4" height="2"/><rect x="1.8" y="10" width="2.4" height="2"/><rect x="5.3" y="10" width="2.4" height="2"/><rect x="8.8" y="10" width="2.4" height="2"/><rect x="1.8" y="13" width="2.4" height="2"/><rect x="5.3" y="13" width="2.4" height="2"/><rect x="8.8" y="13" width="2.4" height="2"/></g></svg>
<svg style="position:absolute;left:1549px;top:51px;overflow:visible" width="28" height="34" viewBox="0 0 28 34"><rect x="0.5" y="3.5" width="21" height="25" rx="1" fill="#e0a868"/><rect x="7" y="0.5" width="8" height="4.5" rx="1" fill="#e8e8e8"/><rect x="5" y="3.5" width="12" height="2" fill="#e8e8e8"/><path d="M9,11 H21 L27,17 V33 H9 Z" fill="#dedede"/><path d="M21,11 V17 H27 Z" fill="#f6f6f6"/></svg>
<div class="t" style="left:1549.40px;top:87.80px;font-size:12px;line-height:14.40px;color:#ececec;letter-spacing:-0.637px;">Paste</div>
<svg style="position:absolute;left:1560.5px;top:104.75px;overflow:visible" width="6" height="3.5" viewBox="0 0 6 3.5"><polygon points="0,0 6,0 3.0,3.5" fill="#ececec"/></svg>
<svg style="position:absolute;left:1592px;top:52px;overflow:visible" width="18" height="18" viewBox="0 0 18 18"><rect x="1" y="1" width="10.5" height="12" fill="#d4d4d4"/><path d="M2.5,3.5 h7 M2.5,6 h5 M2.5,8.5 h4" stroke="#555" stroke-width="1.1"/><path d="M8,5 L13.5,13 M14,5 L9,13" stroke="#eee" stroke-width="1.3"/><circle cx="8.5" cy="15" r="1.8" fill="none" stroke="#eee" stroke-width="1"/><circle cx="14.5" cy="15" r="1.8" fill="none" stroke="#eee" stroke-width="1"/></svg>
<svg style="position:absolute;left:1593px;top:77px;overflow:visible" width="16" height="17" viewBox="0 0 16 17"><path d="M1,0.5 H6.5 L9,3 V11 H1 Z" fill="#cfcfcf"/><path d="M5,4.5 H11 L14,7.5 V16.5 H5 Z" fill="#e2e2e2" stroke="#5b5b5b" stroke-width="0.8"/><path d="M11,4.5 V7.5 H14" fill="none" stroke="#888" stroke-width="0.8"/></svg>
<svg style="position:absolute;left:1631px;top:56px;overflow:visible" width="32" height="24" viewBox="0 0 32 24"><path d="M0,0 H13.5 V9.5 H32 V24 H0 Z" fill="#e2e2e2"/></svg>
<div class="t" style="left:1635.40px;top:87.80px;font-size:12px;line-height:14.40px;color:#ececec;letter-spacing:-0.888px;">Base</div>
<svg style="position:absolute;left:1644.1px;top:104.75px;overflow:visible" width="6" height="3.5" viewBox="0 0 6 3.5"><polygon points="0,0 6,0 3.0,3.5" fill="#ececec"/></svg>
<div style="position:absolute;left:0px;top:0px;width:41px;height:41px;background:#120a08"></div>
<div style="position:absolute;left:1px;top:1px;width:39px;height:39px;background:linear-gradient(#dcdcdc 0%,#c2c4c5 6%,#b4b6b8 22%,#a8aaac 50%,#8e9092 72%,#7a7c7e 90%,#8a8c8e 100%);box-shadow:inset 1px 0 0 rgba(255,255,255,0.35),inset -1px 0 0 rgba(255,255,255,0.25)"></div>
<svg style="position:absolute;left:0px;top:0px" width="41" height="41" viewBox="0 0 41 41"><path d="M13.1,3 L19.5,3 L28.1,27 Q28.4,28.9 26.5,28.9 L23,28.9 Q21.9,28.9 21.7,27.5 L20.8,22.3 L12.6,22.3 L11.6,27.5 Q11.3,28.9 10,28.9 L6.5,28.9 Q4.5,28.9 5,27 Z M16.5,8.6 L18.2,15 L14.6,15 Z" fill="#b9292c" fill-rule="evenodd"/><rect x="7" y="24.5" width="2.8" height="4" rx="1" fill="#e0946a"/><rect x="23.3" y="24.3" width="2.6" height="4.2" rx="1" fill="#e0946a"/><path d="M5.6,27 C6.5,24 7.5,21.5 9.5,20.8 C13,19.8 17,20.8 21,19.6" fill="none" stroke="#4a160e" stroke-width="1" stroke-dasharray="2.5,1"/><path d="M11.2,17 l2.6,-3.4 M13,12.5 l1,2" stroke="#b07a5a" stroke-width="0.9"/></svg>
<svg style="position:absolute;left:31.0px;top:18.2px" width="7" height="4" viewBox="0 0 7 4"><polygon points="0,0 7,0 3.5,4" fill="#262a2c"/></svg>
<div style="position:absolute;left:46px;top:27px;width:51px;height:18px;background:linear-gradient(#6a6a6a 0%,#5b5b5b 100%);border:1px solid #2b2b2b;border-bottom:none;box-sizing:border-box;border-radius:2px 2px 0 0"></div>
<div class="t" style="left:55.40px;top:28.30px;font-size:12px;line-height:14.40px;color:#f2f2f2;letter-spacing:0.223px;">Home</div>
<div class="t" style="left:107.80px;top:28.30px;font-size:12px;line-height:14.40px;color:#dcdcdc;letter-spacing:-0.135px;">Insert</div>
<div class="t" style="left:157.00px;top:28.30px;font-size:12px;line-height:14.40px;color:#dcdcdc;letter-spacing:0.120px;">Annotate</div>
<div class="t" style="left:226.00px;top:28.30px;font-size:12px;line-height:14.40px;color:#dcdcdc;letter-spacing:-0.101px;">Parametric</div>
<div class="t" style="left:302.80px;top:28.30px;font-size:12px;line-height:14.40px;color:#dcdcdc;letter-spacing:-0.148px;">View</div>
<div class="t" style="left:348.00px;top:28.30px;font-size:12px;line-height:14.40px;color:#dcdcdc;letter-spacing:-0.061px;">Manage</div>
<div class="t" style="left:411.00px;top:28.30px;font-size:12px;line-height:14.40px;color:#dcdcdc;letter-spacing:0.329px;">Output</div>
<div class="t" style="left:469.00px;top:28.30px;font-size:12px;line-height:14.40px;color:#dcdcdc;letter-spacing:0.188px;">Add-ins</div>
<div class="t" style="left:531.50px;top:28.30px;font-size:12px;line-height:14.40px;color:#dcdcdc;letter-spacing:-0.079px;">Collaborate</div>
<div class="t" style="left:612.00px;top:28.30px;font-size:12px;line-height:14.40px;color:#dcdcdc;letter-spacing:-0.181px;">Featured Apps</div>
<div class="t" style="left:708.00px;top:28.30px;font-size:12px;line-height:14.40px;color:#dcdcdc;letter-spacing:-0.421px;">Express Tools</div>
<div style="position:absolute;left:0px;top:144px;width:1917px;height:29px;background:#3a3a3a"></div>
<div style="position:absolute;left:0px;top:144px;width:1917px;height:3px;background:#363636"></div>
<div style="position:absolute;left:0px;top:169px;width:1917px;height:4px;background:linear-gradient(#7a7c7c,#727474)"></div>
<svg style="position:absolute;left:0;top:0" width="1917" height="175"><defs><linearGradient id="gt" x1="0" y1="0" x2="0" y2="1"><stop offset="0" stop-color="#5f5f5f"/><stop offset="1" stop-color="#535353"/></linearGradient><linearGradient id="ga" x1="0" y1="0" x2="0" y2="1"><stop offset="0" stop-color="#5e6062"/><stop offset="1" stop-color="#848686"/></linearGradient></defs><path d="M17,169.2 C24,169.2 22,146.9 30,146.9 H137 Q143,146.9 143,152.9 V169.2 Z" fill="url(#gt)" stroke="#333" stroke-width="0.6"/><path d="M140,169.2 C147,169.2 145,146.9 153,146.9 H295 Q301,146.9 301,152.9 V169.2 Z" fill="url(#gt)" stroke="#333" stroke-width="0.6"/><path d="M283.8,155 L290.2,161.4 M290.2,155 L283.8,161.4" stroke="#3a3c3e" stroke-width="1.25"/><path d="M298,169.2 C305,169.2 303,146.9 311,146.9 H435 Q441,146.9 441,152.9 V169.2 Z" fill="url(#gt)" stroke="#333" stroke-width="0.6"/><path d="M423.2,155 L429.59999999999997,161.4 M429.59999999999997,155 L423.2,161.4" stroke="#3a3c3e" stroke-width="1.25"/><path d="M438,169.2 C445,169.2 443,146.9 451,146.9 H592 Q598,146.9 598,152.9 V169.2 Z" fill="url(#gt)" stroke="#333" stroke-width="0.6"/><path d="M580.0999999999999,155 L586.5,161.4 M586.5,155 L580.0999999999999,161.4" stroke="#3a3c3e" stroke-width="1.25"/><path d="M595,169.2 C602,169.2 600,146.9 608,146.9 H751.5 Q757.5,146.9 757.5,152.9 V169.2 Z" fill="url(#gt)" stroke="#333" stroke-width="0.6"/><path d="M740.3,155 L746.7,161.4 M746.7,155 L740.3,161.4" stroke="#3a3c3e" stroke-width="1.25"/><path d="M754.5,169.2 C761.5,169.2 759.5,146.9 767.5,146.9 H912 Q918,146.9 918,152.9 V169.2 Z" fill="url(#gt)" stroke="#333" stroke-width="0.6"/><path d="M899.9,155 L906.3000000000001,161.4 M906.3000000000001,155 L899.9,161.4" stroke="#3a3c3e" stroke-width="1.25"/><path d="M915,169.2 C922,169.2 920,146.9 928,146.9 H1035 Q1041,146.9 1041,152.9 V169.2 Z" fill="url(#gt)" stroke="#333" stroke-width="0.6"/><path d="M1023.0999999999999,155 L1029.5,161.4 M1029.5,155 L1023.0999999999999,161.4" stroke="#3a3c3e" stroke-width="1.25"/><path d="M1038,169.2 C1045,169.2 1043,146.9 1051,146.9 H1158 Q1164,146.9 1164,152.9 V169.2 Z" fill="url(#gt)" stroke="#333" stroke-width="0.6"/><path d="M1146.0,155 L1152.4,161.4 M1152.4,155 L1146.0,161.4" stroke="#3a3c3e" stroke-width="1.25"/><path d="M1161,169.2 C1168,169.2 1166,146.9 1174,146.9 H1281 Q1287,146.9 1287,152.9 V169.2 Z" fill="url(#gt)" stroke="#333" stroke-width="0.6"/><path d="M1268.8,155 L1275.2,161.4 M1275.2,155 L1268.8,161.4" stroke="#3a3c3e" stroke-width="1.25"/><path d="M1284,169.2 C1291,169.2 1289,146.9 1297,146.9 H1404 Q1410,146.9 1410,152.9 V169.2 Z" fill="url(#gt)" stroke="#333" stroke-width="0.6"/><path d="M1392.1,155 L1398.5,161.4 M1398.5,155 L1392.1,161.4" stroke="#3a3c3e" stroke-width="1.25"/><path d="M1407,169.2 C1414,169.2 1412,146.9 1420,146.9 H1527 Q1533,146.9 1533,152.9 V169.2 Z" fill="url(#gt)" stroke="#333" stroke-width="0.6"/><path d="M1515.0,155 L1521.4,161.4 M1521.4,155 L1515.0,161.4" stroke="#3a3c3e" stroke-width="1.25"/><path d="M1530,169.2 C1537,169.2 1535,146.9 1543,146.9 H1650.5 Q1656.5,146.9 1656.5,152.9 V169.2 Z" fill="url(#gt)" stroke="#333" stroke-width="0.6"/><path d="M1637.8999999999999,155 L1644.3,161.4 M1644.3,155 L1637.8999999999999,161.4" stroke="#3a3c3e" stroke-width="1.25"/><path d="M1656.5,169.8 C1662.5,169.3 1658.5,146.9 1665.5,146.9 H1771 C1778,146.9 1779,169.3 1787,169.8 Z" fill="url(#ga)" stroke="#333" stroke-width="0.6"/><path d="M1761.2,155 L1767.6000000000001,161.4 M1767.6000000000001,155 L1761.2,161.4" stroke="#3a3c3e" stroke-width="1.25"/><path d="M1788,151.5 H1799 C1806,151.5 1809.5,158 1809.5,165.5 H1799 C1792,165.5 1790,158 1788,151.5 Z" fill="#4e4e4e" stroke="#2f2f2f"/><path d="M1799,154.5 V163.5 M1794.5,159 H1803.5" stroke="#d8d8d8" stroke-width="1.8"/><path d="M1902.5,151.5 L1906,156 L1909.5,151.5 M1902.5,157.5 L1906,162 L1909.5,157.5" fill="none" stroke="#c8c8c8" stroke-width="1.6"/></svg>
<div class="t" style="left:31.70px;top:152.30px;font-size:12px;line-height:14.40px;color:#c6cad2;letter-spacing:-0.248px;">Start</div>
<div class="t" style="left:155.30px;top:152.30px;font-size:12px;line-height:14.40px;color:#c6cad2;letter-spacing:-0.527px;">KBA034-183 NEW 2116</div>
<div class="t" style="left:313.90px;top:152.30px;font-size:12px;line-height:14.40px;color:#c6cad2;letter-spacing:-0.670px;">MASTERPLAN TLJ*</div>
<div class="t" style="left:453.00px;top:152.30px;font-size:12px;line-height:14.40px;color:#c6cad2;letter-spacing:-0.429px;">AR.A1-03 DENAH LT.G</div>
<div class="t" style="left:610.00px;top:152.30px;font-size:12px;line-height:14.40px;color:#c6cad2;letter-spacing:-0.348px;">AR.A1-04 DENAH LT.1*</div>
<div class="t" style="left:770.20px;top:152.30px;font-size:12px;line-height:14.40px;color:#c6cad2;letter-spacing:-0.383px;">AR.A1-05 DENAH LT.2*</div>
<div class="t" style="left:930.50px;top:152.30px;font-size:12px;line-height:14.40px;color:#c6cad2;letter-spacing:-0.356px;">Menara 1500</div>
<div class="t" style="left:1053.40px;top:152.30px;font-size:12px;line-height:14.40px;color:#c6cad2;letter-spacing:-0.365px;">Menara 3200</div>
<div class="t" style="left:1176.60px;top:152.30px;font-size:12px;line-height:14.40px;color:#c6cad2;letter-spacing:-0.378px;">Menara 3200-B</div>
<div class="t" style="left:1299.30px;top:152.30px;font-size:12px;line-height:14.40px;color:#c6cad2;letter-spacing:-0.329px;">Menara 3400</div>
<div class="t" style="left:1422.20px;top:152.30px;font-size:12px;line-height:14.40px;color:#c6cad2;letter-spacing:-0.309px;">Menara 3400-B</div>
<div class="t" style="left:1545.10px;top:152.30px;font-size:12px;line-height:14.40px;color:#c6cad2;letter-spacing:-0.729px;">PEKAPURAN*</div>
<div class="t" style="left:1668.00px;top:152.30px;font-size:12px;line-height:14.40px;color:#f4f4f4;letter-spacing:-0.690px;">PEKAPURAN-1</div>
<div style="position:absolute;left:1912px;top:173px;width:5px;height:830px;background:#d2e1f2"></div>
<div class="t" style="left:4.00px;top:180.30px;font-size:12px;line-height:14.40px;color:#e8e8e8;letter-spacing:0.142px;">[−][Top][2D Wireframe]</div>
<div style="position:absolute;left:1851px;top:189px;width:10px;height:3px;background:#f2f2f2"></div>
<svg style="position:absolute;left:1871px;top:182px;overflow:visible" width="11" height="11" viewBox="0 0 11 11"><path d="M0.8,3.8 H7.2 V10.2 H0.8 Z" fill="none" stroke="#f2f2f2" stroke-width="1.6"/><path d="M3,3 V0.8 H10.2 V7.8 H8" fill="none" stroke="#f2f2f2" stroke-width="1.4"/></svg>
<svg style="position:absolute;left:1891px;top:183px;overflow:visible" width="10" height="10" viewBox="0 0 10 10"><path d="M1,1 L9,9 M9,1 L1,9" stroke="#f2f2f2" stroke-width="2.2"/></svg>
<svg style="position:absolute;left:1760px;top:210px;overflow:visible" width="140" height="140" viewBox="0 0 140 140"><circle cx="68.8" cy="68.8" r="53.5" fill="none" stroke="#434a52" stroke-width="13.6"/><rect x="43.5" y="43" width="51.6" height="51.7" fill="#a7a9ab"/><rect x="52.7" y="52.7" width="32.7" height="32.3" fill="#9b9d9f"/></svg>
<svg style="position:absolute;left:0;top:0;overflow:visible" width="1" height="1"><text x="1822.6" y="231" font-family="Liberation Sans" font-weight="bold" font-size="22.86" fill="#b6b7b8" stroke="#b6b7b8" stroke-width="0.5" textLength="12.5" lengthAdjust="spacingAndGlyphs">N</text></svg>
<svg style="position:absolute;left:0;top:0;overflow:visible" width="1" height="1"><text x="1822.6" y="343.8" font-family="Liberation Sans" font-weight="bold" font-size="23.14" fill="#b6b7b8" stroke="#b6b7b8" stroke-width="0.5" textLength="12.800000000000182" lengthAdjust="spacingAndGlyphs">S</text></svg>
<svg style="position:absolute;left:0;top:0;overflow:visible" width="1" height="1"><text x="1763" y="287.3" font-family="Liberation Sans" font-weight="bold" font-size="22.86" fill="#b6b7b8" stroke="#b6b7b8" stroke-width="0.5" textLength="19.40000000000009" lengthAdjust="spacingAndGlyphs">W</text></svg>
<svg style="position:absolute;left:0;top:0;overflow:visible" width="1" height="1"><text x="1879.8" y="287.3" font-family="Liberation Sans" font-weight="bold" font-size="22.86" fill="#b6b7b8" stroke="#b6b7b8" stroke-width="0.5" textLength="11.600000000000136" lengthAdjust="spacingAndGlyphs">E</text></svg>
<svg style="position:absolute;left:0;top:0;overflow:visible" width="1" height="1"><text x="1818.5" y="283.7" font-family="Liberation Sans" font-weight="bold" font-size="13.29" fill="#55585c" stroke="#55585c" stroke-width="0.5" textLength="21.5" lengthAdjust="spacingAndGlyphs">TOP</text></svg>
<div style="position:absolute;left:1805px;top:366px;width:48px;height:18px;background:#8b8d8f;border:1px solid #6c6e70;border-radius:4px;box-sizing:border-box"></div>
<svg style="position:absolute;left:0;top:0;overflow:visible" width="1" height="1"><text x="1809.8" y="377.6" font-family="Liberation Sans" font-size="10.8" fill="#3c3e42" textLength="23.5" lengthAdjust="spacingAndGlyphs">WCS</text><polygon points="1839.5,371.9 1847.3,371.9 1843.4,376.6" fill="none" stroke="#c4c6c8" stroke-width="1"/></svg>
<div style="position:absolute;left:1876px;top:408px;width:32px;height:212px;background:#67696b;border:1px dotted #4a4c50;border-radius:4px;box-sizing:border-box"></div>
<svg style="position:absolute;left:1876px;top:408px;overflow:visible" width="32" height="212" viewBox="0 0 32 212"><g fill="none" stroke="#51565c" stroke-width="1.3">
<circle cx="25.8" cy="6" r="2.6"/><path d="M24.3,4.5 l3,3 M27.3,4.5 l-3,3"/>
<path d="M16,19 H22 C26,19 27,21 27,25 V31 C27,37 22,42 16,42 C10,42 5,37 5,31 C5,24 10,19 16,19 Z"/><circle cx="16" cy="30" r="6.3"/><path d="M7,36 C10,33 12,35 16,36.5 C20,35 22,33 25,36"/>
<path d="M9,80 C7,77 5.5,75 7,74 C9,73 11,76 12,78 V68 C12,66 14.5,66 14.5,68 V74 V66 C14.5,64 17,64 17,66 V74 V67 C17,65 19.5,65 19.5,67 V75 V70 C19.5,68 22,68 22,70 V79 C22,83 20,86 17,87 H13 C11,86 10,83 9,80 Z"/>
<path d="M5,92 L14,101 M14,92 L5,101 M5,92 h3 M5,92 v3 M14,92 h-3 M14,92 v3 M5,101 h3 M5,101 v-3"/><circle cx="19" cy="104" r="4.2"/><path d="M22,107 l4.5,4.5" stroke-width="2.2"/>
<ellipse cx="16" cy="141" rx="10.5" ry="4.5"/><path d="M14.5,149 V133 H12 L16,127.5 L20,133 H17.5 V149 Z" fill="#67696b"/><path d="M9,143.5 l-3.5,-1 l1,-3"/>
<rect x="5" y="170" width="5.5" height="5.5"/><rect x="13" y="170" width="5.5" height="5.5"/><rect x="21" y="170" width="5.5" height="5.5"/><rect x="5" y="179" width="15" height="12"/>
<circle cx="25.5" cy="206.5" r="2.6"/><path d="M23.8,206.5 h3.4"/>
</g><g fill="#51565c"><polygon points="13.5,50 18.5,50 16,53"/><polygon points="13.5,120 18.5,120 16,123"/><polygon points="13.5,158 18.5,158 16,161"/><polygon points="9,181.5 9,188.5 16,185"/></g></svg>
<div style="position:absolute;left:635px;top:918.5px;width:60px;height:14px;background:rgba(96,98,100,0.86);border-radius:2px"></div>
<div class="t" style="left:637px;top:919.5px;font-family:'Liberation Mono',monospace;font-size:11.67px;line-height:14px;color:#e2e2e2">Command:</div>
<div style="position:absolute;left:635px;top:938.5px;width:255px;height:14px;background:rgba(96,98,100,0.86);border-radius:2px"></div>
<div class="t" style="left:637px;top:939.5px;font-family:'Liberation Mono',monospace;font-size:11.67px;line-height:14px;color:#e2e2e2">**** No System Variable Changed ****</div>
<div style="position:absolute;left:635px;top:958.5px;width:60px;height:14px;background:rgba(96,98,100,0.86);border-radius:2px"></div>
<div class="t" style="left:637px;top:959.5px;font-family:'Liberation Mono',monospace;font-size:11.67px;line-height:14px;color:#e2e2e2">Command:</div>
<div style="position:absolute;left:575px;top:977px;width:54px;height:25px;background:linear-gradient(#5e5e5e,#474747 45%,#383838);border-radius:4px 0 0 4px;border:1px solid #2c2c2c;box-sizing:border-box"></div>
<div style="position:absolute;left:629px;top:977px;width:715px;height:25px;background:rgba(224,224,226,0.85);border-top:1px dotted #e8e8e8;box-sizing:border-box"></div>
<svg style="position:absolute;left:579px;top:980px;overflow:visible" width="6" height="18" viewBox="0 0 6 18"><g fill="#b0b0b0"><rect x="0" y="1" width="1.6" height="1.6"/><rect x="3" y="1" width="1.6" height="1.6"/><rect x="0" y="4.2" width="1.6" height="1.6"/><rect x="3" y="4.2" width="1.6" height="1.6"/><rect x="0" y="7.4" width="1.6" height="1.6"/><rect x="3" y="7.4" width="1.6" height="1.6"/><rect x="0" y="10.6" width="1.6" height="1.6"/><rect x="3" y="10.6" width="1.6" height="1.6"/><rect x="0" y="13.8" width="1.6" height="1.6"/><rect x="3" y="13.8" width="1.6" height="1.6"/></g></svg>
<svg style="position:absolute;left:590px;top:985px;overflow:visible" width="10" height="8" viewBox="0 0 10 8"><path d="M1,0.6 L9,7.4 M9,0.6 L1,7.4" stroke="#f0f0f0" stroke-width="2"/></svg>
<svg style="position:absolute;left:610px;top:982px;overflow:visible" width="15" height="15" viewBox="0 0 15 15"><path d="M5.5,1 C3,0.2 0.8,2 1.2,4.6 L3.5,2.6 L5.6,4.6 L3.6,6.8 C6,7.4 7.4,6.4 7.8,5.2 L13,11.5 C14,12.8 12.4,14.2 11.3,13.2 L5.8,7" fill="#e4e4e4" stroke="#f4f4f4" stroke-width="0.8"/></svg>
<div style="position:absolute;left:634px;top:982.5px;width:15px;height:13.5px;background:#b2b2b4;border:1px solid #8a8a8c;box-sizing:border-box;border-radius:1px"></div>
<svg style="position:absolute;left:636px;top:985px;overflow:visible" width="12" height="9" viewBox="0 0 12 9"><path d="M1,0.8 L5,4 L1,7.2" fill="none" stroke="#3c3c3c" stroke-width="1.5"/><path d="M6,7.5 H10" stroke="#3c3c3c" stroke-width="1.4"/></svg>
<svg style="position:absolute;left:652.45px;top:987.5px;overflow:visible" width="5.5" height="3" viewBox="0 0 5.5 3"><polygon points="0,0 5.5,0 2.75,3" fill="#5a5a5a"/></svg>
<div class="t" style="left:666px;top:983px;font-family:'Liberation Mono',monospace;font-style:italic;font-size:11.5px;line-height:14px;color:#6e6e70;letter-spacing:0.0px">Type a command</div>
<svg style="position:absolute;left:1333px;top:986px;overflow:visible" width="8" height="5" viewBox="0 0 8 5"><polygon points="0,4.6 8,4.6 4,0.4" fill="#2a2a2a"/></svg>
<div style="position:absolute;left:0px;top:1003px;width:672px;height:24px;background:#3b3b3b"></div>
<div style="position:absolute;left:672px;top:1003px;width:1245px;height:24px;background:#505050;border-left:1px solid #2e2e2e;border-top:1px solid #444;box-sizing:border-box"></div>
<svg style="position:absolute;left:0px;top:1003px;overflow:visible" width="170" height="24" viewBox="0 0 170 24"><defs><linearGradient id="gm" x1="0" y1="0" x2="0" y2="1"><stop offset="0" stop-color="#5a5f63"/><stop offset="1" stop-color="#8a8c8c"/></linearGradient></defs>
<path d="M70,0.5 H140 C134,1 132,17 126,17.5 H82 C76,17 76,1 70,0.5 Z" fill="#565656" stroke="#2e2e2e"/>
<path d="M6,0.5 H71 C65,1 64,17.5 58,18 H20 C13,17.5 13,1 6,0.5 Z" fill="url(#gm)" stroke="#2e2e2e"/>
<path d="M139,17 C145,16 143,1 150,0.5 H161.5 C160.5,10 156,16.5 150,17 Z" fill="#4f4f4f" stroke="#333"/>
<path d="M150,4.5 V12.5 M146,8.5 H154" stroke="#d4d4d4" stroke-width="1.8"/></svg>
<div class="t" style="left:23.20px;top:1005.30px;font-size:12px;line-height:14.40px;color:#ffffff;letter-spacing:0.067px;font-weight:bold;">Model</div>
<div class="t" style="left:81.40px;top:1005.30px;font-size:12px;line-height:14.40px;color:#c8cad8;letter-spacing:-0.300px;">Layout1</div>
<div style="position:absolute;left:854px;top:1004px;width:2px;height:23px;background:linear-gradient(90deg,#3e3e3e 50%,#5c5c5c 50%)"></div>
<div style="position:absolute;left:904px;top:1004px;width:2px;height:23px;background:linear-gradient(90deg,#3e3e3e 50%,#5c5c5c 50%)"></div>
<div style="position:absolute;left:970px;top:1004px;width:2px;height:23px;background:linear-gradient(90deg,#3e3e3e 50%,#5c5c5c 50%)"></div>
<div style="position:absolute;left:996.5px;top:1004px;width:2px;height:23px;background:linear-gradient(90deg,#3e3e3e 50%,#5c5c5c 50%)"></div>
<div style="position:absolute;left:1021px;top:1004px;width:2px;height:23px;background:linear-gradient(90deg,#3e3e3e 50%,#5c5c5c 50%)"></div>
<div style="position:absolute;left:1124px;top:1004px;width:2px;height:23px;background:linear-gradient(90deg,#3e3e3e 50%,#5c5c5c 50%)"></div>
<div style="position:absolute;left:1188px;top:1004px;width:2px;height:23px;background:linear-gradient(90deg,#3e3e3e 50%,#5c5c5c 50%)"></div>
<div style="position:absolute;left:1213px;top:1004px;width:2px;height:23px;background:linear-gradient(90deg,#3e3e3e 50%,#5c5c5c 50%)"></div>
<div style="position:absolute;left:1239px;top:1004px;width:2px;height:23px;background:linear-gradient(90deg,#3e3e3e 50%,#5c5c5c 50%)"></div>
<div style="position:absolute;left:1263px;top:1004px;width:2px;height:23px;background:linear-gradient(90deg,#3e3e3e 50%,#5c5c5c 50%)"></div>
<div style="position:absolute;left:1302px;top:1004px;width:2px;height:23px;background:linear-gradient(90deg,#3e3e3e 50%,#5c5c5c 50%)"></div>
<div style="position:absolute;left:1408px;top:1004px;width:2px;height:23px;background:linear-gradient(90deg,#3e3e3e 50%,#5c5c5c 50%)"></div>
<div style="position:absolute;left:1556px;top:1004px;width:2px;height:23px;background:linear-gradient(90deg,#3e3e3e 50%,#5c5c5c 50%)"></div>
<div style="position:absolute;left:1598px;top:1004px;width:2px;height:23px;background:linear-gradient(90deg,#3e3e3e 50%,#5c5c5c 50%)"></div>
<div style="position:absolute;left:1625px;top:1004px;width:2px;height:23px;background:linear-gradient(90deg,#3e3e3e 50%,#5c5c5c 50%)"></div>
<div style="position:absolute;left:1723px;top:1004px;width:2px;height:23px;background:linear-gradient(90deg,#3e3e3e 50%,#5c5c5c 50%)"></div>
<div style="position:absolute;left:1748px;top:1004px;width:2px;height:23px;background:linear-gradient(90deg,#3e3e3e 50%,#5c5c5c 50%)"></div>
<div style="position:absolute;left:1790px;top:1004px;width:2px;height:23px;background:linear-gradient(90deg,#3e3e3e 50%,#5c5c5c 50%)"></div>
<div style="position:absolute;left:1812.5px;top:1004px;width:2px;height:23px;background:linear-gradient(90deg,#3e3e3e 50%,#5c5c5c 50%)"></div>
<div style="position:absolute;left:1843.5px;top:1004px;width:2px;height:23px;background:linear-gradient(90deg,#3e3e3e 50%,#5c5c5c 50%)"></div>
<div style="position:absolute;left:1868.5px;top:1004px;width:2px;height:23px;background:linear-gradient(90deg,#3e3e3e 50%,#5c5c5c 50%)"></div>
<div class="t" style="left:684.10px;top:1009.80px;font-size:12px;line-height:14.40px;color:#f4f4f4;letter-spacing:-0.124px;">15913.7406, -190.3158, 0.0000</div>
<div class="t" style="left:859.80px;top:1009.80px;font-size:12px;line-height:14.40px;color:#f4f4f4;letter-spacing:-0.635px;">MODEL</div>
<div style="position:absolute;left:998px;top:1006px;width:22px;height:21px;background:#5f90c6"></div>
<div style="position:absolute;left:1023px;top:1006px;width:22px;height:21px;background:#5f90c6"></div>
<div style="position:absolute;left:1126px;top:1006px;width:22px;height:21px;background:#5f90c6"></div>
<div style="position:absolute;left:1150px;top:1006px;width:22px;height:21px;background:#5f90c6"></div>
<div style="position:absolute;left:1307px;top:1006px;width:22px;height:21px;background:#5f90c6"></div>
<div style="position:absolute;left:1370px;top:1006px;width:22px;height:21px;background:#5f90c6"></div>
<div style="position:absolute;left:1412px;top:1006px;width:22px;height:21px;background:#5f90c6"></div>
<div style="position:absolute;left:1819px;top:1006px;width:22px;height:21px;background:#5f90c6"></div>
<div style="position:absolute;left:1215px;top:1006px;width:22px;height:21px;background:#5f90c6"></div>
<svg style="position:absolute;left:910px;top:1009px;overflow:visible" width="16" height="16" viewBox="0 0 16 16"><path d="M3.5,0 V16 M7.5,0 V16 M11.5,0 V16 M0,3.5 H15 M0,7.5 H15 M0,11.5 H15" stroke="#eeeeee" stroke-width="1" shape-rendering="crispEdges"/></svg>
<svg style="position:absolute;left:935px;top:1010px;overflow:visible" width="14" height="14" viewBox="0 0 14 14"><g fill="#eeeeee"><rect x="1" y="1" width="2.2" height="2.2"/><rect x="1" y="6" width="2.2" height="2.2"/><rect x="1" y="11" width="2.2" height="2.2"/><rect x="6" y="1" width="2.2" height="2.2"/><rect x="6" y="6" width="2.2" height="2.2"/><rect x="6" y="11" width="2.2" height="2.2"/><rect x="11" y="1" width="2.2" height="2.2"/><rect x="11" y="6" width="2.2" height="2.2"/><rect x="11" y="11" width="2.2" height="2.2"/></g></svg>
<svg style="position:absolute;left:958.0px;top:1015.0px;overflow:visible" width="7" height="4" viewBox="0 0 7 4"><polygon points="0,0 7,0 3.5,4" fill="#ececec"/></svg>
<svg style="position:absolute;left:976px;top:1009px;overflow:visible" width="16" height="16" viewBox="0 0 16 16"><rect x="0.5" y="9.5" width="7" height="6" fill="#d8d8d8"/><path d="M7.5,9.5 V0.8 H14.5 V5.5 H7.5" fill="none" stroke="#eeeeee" stroke-width="1.2"/></svg>
<svg style="position:absolute;left:1000px;top:1009px;overflow:visible" width="18" height="16" viewBox="0 0 18 16"><path d="M5,1 V9 M1,5 H9" stroke="#eeeeee" stroke-width="1.4"/><rect x="7" y="9.5" width="10" height="4.5" fill="#eeeeee"/><rect x="8.5" y="11" width="1.2" height="1.5" fill="#5f90c6"/></svg>
<svg style="position:absolute;left:1025px;top:1008px;overflow:visible" width="18" height="18" viewBox="0 0 18 18"><path d="M2,1 V16.5 H17" fill="none" stroke="#eeeeee" stroke-width="1.5"/><path d="M2,12 H6.5 V16.5" fill="none" stroke="#eeeeee" stroke-width="1.1"/></svg>
<svg style="position:absolute;left:1049px;top:1009px;overflow:visible" width="18" height="17" viewBox="0 0 18 17"><circle cx="7.5" cy="8.5" r="6.3" fill="none" stroke="#eeeeee" stroke-width="1.3"/><path d="M7,9.5 L14.5,1.5 M7,9.5 H17" stroke="#eeeeee" stroke-width="1.2"/></svg>
<svg style="position:absolute;left:1074.0px;top:1015.0px;overflow:visible" width="7" height="4" viewBox="0 0 7 4"><polygon points="0,0 7,0 3.5,4" fill="#ececec"/></svg>
<svg style="position:absolute;left:1089px;top:1008px;overflow:visible" width="15" height="17" viewBox="0 0 15 17"><path d="M7.5,0.5 V16" stroke="#6fe08a" stroke-width="1.3"/><path d="M1,1.5 L13.5,15" stroke="#e07a4a" stroke-width="1.1"/><rect x="6" y="7" width="3" height="3" fill="#333" stroke="#eeeeee" stroke-width="0.9"/></svg>
<svg style="position:absolute;left:1113.1px;top:1015.0px;overflow:visible" width="7" height="4" viewBox="0 0 7 4"><polygon points="0,0 7,0 3.5,4" fill="#ececec"/></svg>
<svg style="position:absolute;left:1128px;top:1009px;overflow:visible" width="18" height="16" viewBox="0 0 18 16"><path d="M1,14.5 L13,1.5 M1,14.5 H16.5" stroke="#eeeeee" stroke-width="1.4" fill="none"/><rect x="5.6" y="6.6" width="2.8" height="2.8" fill="#eeeeee"/></svg>
<svg style="position:absolute;left:1152px;top:1008px;overflow:visible" width="18" height="17" viewBox="0 0 18 17"><rect x="3.5" y="3.5" width="13" height="12.5" fill="none" stroke="#eeeeee" stroke-width="1.4"/><rect x="1.5" y="1.5" width="4" height="4" fill="#5f90c6" stroke="#eeeeee" stroke-width="1"/></svg>
<svg style="position:absolute;left:1177.0px;top:1015.0px;overflow:visible" width="7" height="4" viewBox="0 0 7 4"><polygon points="0,0 7,0 3.5,4" fill="#ececec"/></svg>
<svg style="position:absolute;left:1193px;top:1009px;overflow:visible" width="17" height="16" viewBox="0 0 17 16"><path d="M0,1 H16 M0,6 H16 M0,11 H16" stroke="#eeeeee" stroke-width="1"/><rect x="0" y="2" width="8" height="2" fill="#d4d4d4"/><rect x="0" y="7" width="8" height="2.4" fill="#d4d4d4"/><rect x="0" y="12" width="8" height="3" fill="#d4d4d4"/></svg>
<svg style="position:absolute;left:1218px;top:1009px;overflow:visible" width="16" height="16" viewBox="0 0 16 16"><rect x="0.5" y="0.5" width="15" height="15" fill="#f4f4f4" stroke="#fff"/><g fill="#5f90c6"><rect x="1.5" y="1.5" width="3.3" height="3.3"/><rect x="1.5" y="8.1" width="3.3" height="3.3"/><rect x="4.8" y="4.8" width="3.3" height="3.3"/><rect x="4.8" y="11.399999999999999" width="3.3" height="3.3"/><rect x="8.1" y="1.5" width="3.3" height="3.3"/><rect x="8.1" y="8.1" width="3.3" height="3.3"/><rect x="11.399999999999999" y="4.8" width="3.3" height="3.3"/><rect x="11.399999999999999" y="11.399999999999999" width="3.3" height="3.3"/></g></svg>
<svg style="position:absolute;left:1242px;top:1008px;overflow:visible" width="18" height="18" viewBox="0 0 18 18"><path d="M1,1 h5 M3.5,0 v4" stroke="#eeeeee" stroke-width="1"/><rect x="3" y="4" width="8" height="8" fill="none" stroke="#c8c8c8" stroke-width="1"/><rect x="6.5" y="6.5" width="10.5" height="10.5" fill="#5ed08a"/></svg>
<svg style="position:absolute;left:1268px;top:1009px;overflow:visible" width="18" height="16" viewBox="0 0 18 16"><path d="M1,6 L5,1.5 H16.5 V10 L12.5,14.5 H1 Z M1,6 H12.5 V14.5 M12.5,6 L16.5,1.5" fill="none" stroke="#eeeeee" stroke-width="1.2"/><rect x="0" y="10.5" width="4" height="4" fill="#505050" stroke="#f0a070" stroke-width="1"/></svg>
<svg style="position:absolute;left:1292.0px;top:1015.0px;overflow:visible" width="7" height="4" viewBox="0 0 7 4"><polygon points="0,0 7,0 3.5,4" fill="#ececec"/></svg>
<svg style="position:absolute;left:1309px;top:1008px;overflow:visible" width="18" height="18" viewBox="0 0 18 18"><path d="M3.5,2 V15 H15" fill="none" stroke="#eeeeee" stroke-width="1.5"/><polygon points="3.5,0 0.8,4 6.2,4" fill="#eeeeee"/><polygon points="17.5,15 13.5,12.3 13.5,17.7" fill="#eeeeee"/><path d="M11.5,2.5 L8,7.5 H10.5 L9,11 L13.5,6 H11 L13,2.5 Z" fill="#f6e6b0"/></svg>
<svg style="position:absolute;left:1333px;top:1008px;overflow:visible" width="18" height="18" viewBox="0 0 18 18"><path d="M3.5,4.5 L6.5,1.5 H16.5 V11.5 L13.5,14.5" fill="none" stroke="#eeeeee" stroke-width="1.1"/><rect x="2.5" y="4.5" width="11" height="10.5" fill="none" stroke="#eeeeee" stroke-width="1.3" stroke-dasharray="4.5,2"/><g fill="#6abcf2"><rect x="0.5" y="2.5" width="3.6" height="3.6"/><rect x="11.5" y="2.5" width="3.6" height="3.6"/><rect x="0.5" y="13" width="3.6" height="3.6"/><rect x="11.5" y="13" width="3.6" height="3.6"/></g></svg>
<svg style="position:absolute;left:1358.0px;top:1015.0px;overflow:visible" width="7" height="4" viewBox="0 0 7 4"><polygon points="0,0 7,0 3.5,4" fill="#ececec"/></svg>
<svg style="position:absolute;left:1372px;top:1008px;overflow:visible" width="18" height="18" viewBox="0 0 18 18"><path d="M9,2 L16,6.5 V13 L9,17 L2,13 V6.5 Z M9,2 V9.5 M9,9.5 L2.5,13.5 M9,9.5 L15.5,13.5" fill="none" stroke="#eeeeee" stroke-width="1.1"/><circle cx="9" cy="2.6" r="1.4" fill="#5f90c6" stroke="#eeeeee"/><circle cx="9" cy="9.5" r="1.2" fill="#5f90c6" stroke="#eeeeee"/><circle cx="2.6" cy="13.3" r="1.4" fill="#5f90c6" stroke="#eeeeee"/><circle cx="15.4" cy="13.3" r="1.4" fill="#5f90c6" stroke="#eeeeee"/></svg>
<svg style="position:absolute;left:1396.8px;top:1015.0px;overflow:visible" width="7" height="4" viewBox="0 0 7 4"><polygon points="0,0 7,0 3.5,4" fill="#ececec"/></svg>
<svg style="position:absolute;left:1414px;top:1008px;overflow:visible" width="18" height="18" viewBox="0 0 18 18"><path d="M9,1 L11.3,8.5 L17,17 L10.8,13.2 L9,16 L7.2,13.2 L1,17 L6.7,8.5 Z" fill="#eeeeee"/><circle cx="14.5" cy="4" r="2" fill="none" stroke="#eeeeee" stroke-width="1.1"/></svg>
<svg style="position:absolute;left:1438px;top:1008px;overflow:visible" width="18" height="18" viewBox="0 0 18 18"><path d="M9,1 L11.3,8.5 L17,17 L10.8,13.2 L9,16 L7.2,13.2 L1,17 L6.7,8.5 Z" fill="#d8d8d8"/><path d="M14,0.5 L11.5,4.5 H13.5 L12.5,7.5 L16.5,3 H14.2 L15.8,0.5 Z" fill="#d8d8d8"/></svg>
<svg style="position:absolute;left:1462px;top:1008px;overflow:visible" width="18" height="18" viewBox="0 0 18 18"><path d="M9,1 L11.3,8.5 L17,17 L10.8,13.2 L9,16 L7.2,13.2 L1,17 L6.7,8.5 Z" fill="#d8d8d8"/></svg>
<div class="t" style="left:1487.70px;top:1009.80px;font-size:12px;line-height:14.40px;color:#f4f4f4;letter-spacing:-0.428px;">1:1 / 100%</div>
<svg style="position:absolute;left:1545.0px;top:1015.0px;overflow:visible" width="7" height="4" viewBox="0 0 7 4"><polygon points="0,0 7,0 3.5,4" fill="#ececec"/></svg>
<svg style="position:absolute;left:1562px;top:1008px;overflow:visible" width="18" height="18" viewBox="0 0 18 18"><g stroke="#eeeeee" stroke-width="3.4"><path d="M9,0.6 V17.4 M0.6,9 H17.4 M3.1,3.1 L14.9,14.9 M14.9,3.1 L3.1,14.9"/></g><circle cx="9" cy="9" r="6" fill="#eeeeee"/><circle cx="9" cy="9" r="2.5" fill="#505050"/></svg>
<svg style="position:absolute;left:1587.2px;top:1015.0px;overflow:visible" width="7" height="4" viewBox="0 0 7 4"><polygon points="0,0 7,0 3.5,4" fill="#ececec"/></svg>
<svg style="position:absolute;left:1603px;top:1008px;overflow:visible" width="17" height="17" viewBox="0 0 17 17"><path d="M8.5,0.5 V16.5 M0.5,8.5 H16.5" stroke="#eeeeee" stroke-width="2"/></svg>
<svg style="position:absolute;left:1632px;top:1008px;overflow:visible" width="10" height="18" viewBox="0 0 10 18"><rect x="0.5" y="0.5" width="7" height="16.5" fill="#e6e6e6"/><path d="M3.5,3 h4 M5,6 h2.5 M3.5,9 h4 M5,12 h2.5 M3.5,15 h4" stroke="#505050" stroke-width="1"/></svg>
<div class="t" style="left:1655.50px;top:1009.80px;font-size:12px;line-height:14.40px;color:#f4f4f4;letter-spacing:-0.020px;">Decimal</div>
<svg style="position:absolute;left:1711.8px;top:1015.0px;overflow:visible" width="7" height="4" viewBox="0 0 7 4"><polygon points="0,0 7,0 3.5,4" fill="#ececec"/></svg>
<svg style="position:absolute;left:1729px;top:1008px;overflow:visible" width="15" height="17" viewBox="0 0 15 17"><rect x="0.8" y="0.8" width="13" height="15.4" fill="none" stroke="#eeeeee" stroke-width="1.3"/><path d="M0.8,3 H13.8" stroke="#eeeeee" stroke-width="1.6"/><path d="M3,6.5 h1.6 M6,6.5 h5.5 M3,9.8 h1.6 M6,9.8 h5.5 M3,13 h1.6 M6,13 h5.5" stroke="#eeeeee" stroke-width="1.3"/></svg>
<svg style="position:absolute;left:1754px;top:1008px;overflow:visible" width="18" height="18" viewBox="0 0 18 18"><rect x="0.8" y="1" width="13.5" height="11.5" fill="none" stroke="#eeeeee" stroke-width="1.3"/><path d="M0.8,3 H14.3" stroke="#eeeeee" stroke-width="1.6"/><rect x="8.5" y="11" width="7" height="5.5" fill="#e8e8e8" stroke="#505050" stroke-width="0.8"/><path d="M12.5,11 V9.5 C12.5,7 16.5,7 16.5,9.5" fill="none" stroke="#eeeeee" stroke-width="1.2"/></svg>
<svg style="position:absolute;left:1779.3px;top:1015.0px;overflow:visible" width="7" height="4" viewBox="0 0 7 4"><polygon points="0,0 7,0 3.5,4" fill="#ececec"/></svg>
<svg style="position:absolute;left:1794px;top:1008px;overflow:visible" width="18" height="18" viewBox="0 0 18 18"><rect x="1" y="1" width="6" height="6" fill="none" stroke="#eeeeee" stroke-width="1.2"/><circle cx="13.5" cy="7.5" r="3.2" fill="none" stroke="#eeeeee" stroke-width="1.2"/><path d="M7.5,10.5 L11,16.5 H4 Z" fill="none" stroke="#eeeeee" stroke-width="1.2"/></svg>
<svg style="position:absolute;left:1821px;top:1008px;overflow:visible" width="18" height="18" viewBox="0 0 18 18"><circle cx="9" cy="9.5" r="7.6" fill="#8fb0b8" stroke="#e8e8e8" stroke-width="1.4"/><path d="M9,12 L14.5,4.5" stroke="#f4f4f4" stroke-width="2"/></svg>
<svg style="position:absolute;left:1848px;top:1008px;overflow:visible" width="17" height="18" viewBox="0 0 17 18"><rect x="0.5" y="0.5" width="11" height="9" fill="#5aa8e8"/><path d="M4,0.5 V9.5 M0.5,4.5 H11.5" stroke="#dff" stroke-width="1.2"/><path d="M8.5,0.5 H10 L12.5,3 V5" fill="#eee"/><rect x="0.5" y="9.5" width="7" height="4" fill="#e8d820"/><path d="M8,11.5 L10.5,14.5 L15.5,8.5" fill="none" stroke="#18a818" stroke-width="1.8"/></svg>
<svg style="position:absolute;left:1874px;top:1009px;overflow:visible" width="17" height="14" viewBox="0 0 17 14"><rect x="0.7" y="0.7" width="15.6" height="11.6" fill="none" stroke="#eeeeee" stroke-width="1.3"/><path d="M3.5,9.5 L6.5,6.5 M3.5,9.5 V7 M3.5,9.5 H6 M13.5,3 L10.5,6 M13.5,3 V5.5 M13.5,3 H11" stroke="#eeeeee" stroke-width="1.1" fill="none"/></svg>
<svg style="position:absolute;left:1897px;top:1009px;overflow:visible" width="17" height="16" viewBox="0 0 17 16"><path d="M0.5,1.8 H16.5 M0.5,7.8 H16.5 M0.5,13.8 H16.5" stroke="#eeeeee" stroke-width="2.2"/></svg>
</div>
</body></html>
